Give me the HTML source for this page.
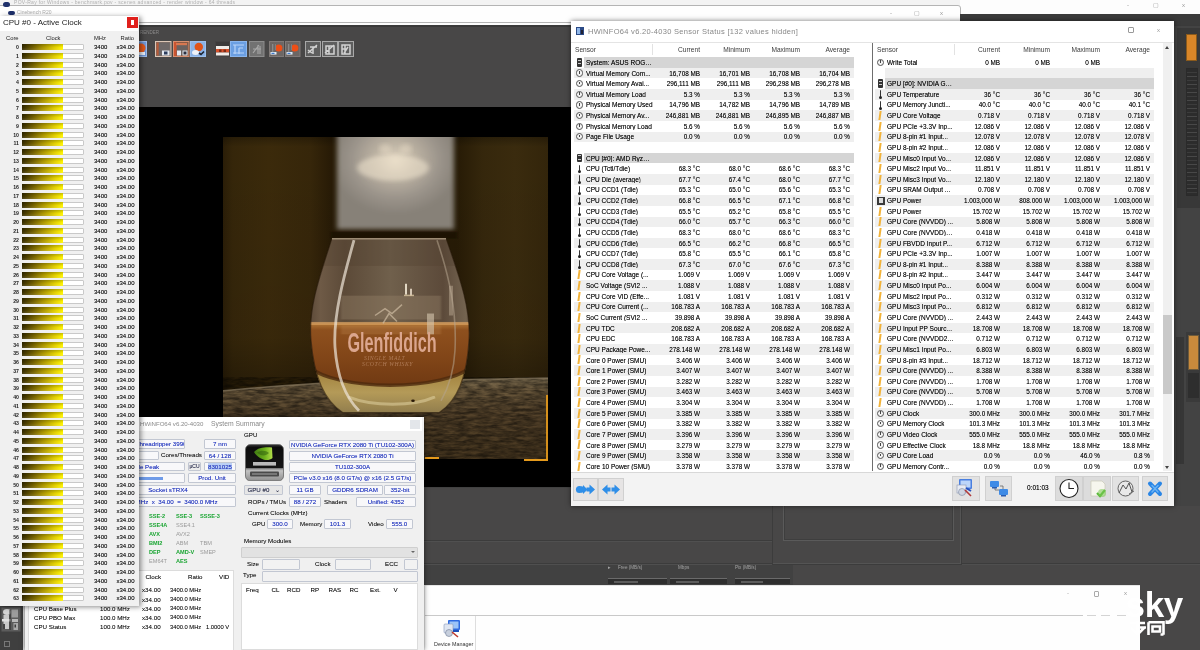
<!DOCTYPE html>
<html><head><meta charset="utf-8"><title>desktop</title>
<style>
*{box-sizing:border-box;margin:0;padding:0}
html,body{width:1200px;height:650px;overflow:hidden;background:#fff}
body{position:relative;font-family:"Liberation Sans",sans-serif;font-size:8px;color:#222;will-change:transform;background:transparent}
.a{position:absolute}
.t{position:absolute;white-space:nowrap;line-height:1}
/* left window */
#lw{left:0;top:16px;width:138.5px;height:590px;background:#f0f0f0;box-shadow:2px 1px 5px rgba(0,0,0,.45)}
#lw .tb{left:0;top:0;width:138px;height:15px;background:#fff}
#lw .row{left:0;width:138px;height:8.75px}
#lw .bar{left:22px;top:1.4px;width:62px;height:6px;background:#fff;border:1px solid #c9c9c9;border-radius:1px}
#lw .fill{left:22px;top:1.4px;width:41px;height:6px;background:linear-gradient(180deg,rgba(0,0,0,.22),rgba(0,0,0,0) 55%,rgba(255,255,255,.12)),linear-gradient(90deg,#332a00 0%,#6e5c00 25%,#a89200 50%,#e2cf00 80%,#fff400 100%)}
#lw .n{left:5px;width:14px;top:2.3px;font-size:5.2px;font-weight:bold;text-align:right;color:#222}
#lw .m{left:94px;top:1.3px;font-size:6px;color:#111;text-shadow:0 0 .4px rgba(0,0,0,.5)}
#lw .x{left:116.5px;top:1.3px;font-size:6px;color:#111;text-shadow:0 0 .4px rgba(0,0,0,.5)}
/* sensors */
#sw{left:571px;top:21px;width:603.3px;height:485.3px;background:#fff;box-shadow:0 0 5px rgba(0,0,0,.55)}
.sr{position:absolute;height:10.63px;font-size:7.4px;color:#0c0c0c;text-shadow:0 0 .5px rgba(0,0,0,.55)}
.sr .l{position:absolute;left:14px;top:1.8px;white-space:nowrap;line-height:1;max-width:76px;overflow:hidden;text-overflow:ellipsis;transform:scaleX(.88);transform-origin:0 50%}
.sr .v{position:absolute;top:1.8px;width:60px;text-align:right;white-space:nowrap;line-height:1;transform:scaleX(.86);transform-origin:100% 50%}
.g1{background:#efefef}
.g2{background:#d5d5d5}
.hd{position:absolute;font-size:6.6px;color:#3a3a3a;white-space:nowrap;line-height:1}
/* summary */
#sm{left:25px;top:417px;width:398.5px;height:233px;background:#f0f0f0;box-shadow:0 0 5px rgba(0,0,0,.55)}
.bx{position:absolute;background:#f8f8fa;border:1px solid #c2c7d2;border-radius:1px;font-size:6.2px;color:#2438c0;text-shadow:0 0 .4px rgba(36,56,190,.55);text-align:center;white-space:nowrap;overflow:hidden}
.lb{position:absolute;font-size:6.2px;color:#161616;text-shadow:0 0 .4px rgba(0,0,0,.4);white-space:nowrap;line-height:1}
.gr{position:absolute;font-size:5.6px;color:#1aa532;white-space:nowrap;line-height:1;font-weight:bold}
.gy{position:absolute;font-size:5.6px;color:#9a9a9a;white-space:nowrap;line-height:1}
</style></head>
<body>
<!-- sec_bg -->
<div class="a" style="left:0;top:0;width:1200px;height:26px;background:#fdfdfd"></div>
<div class="a" style="left:0;top:0;width:960px;height:6px;background:#f3f3f3"></div>
<div class="a" style="left:-3px;top:5.2px;width:963.5px;height:18px;border:1px solid #b4b4b4;border-radius:0 3px 0 0;background:#fefefe"></div>
<div class="t" style="left:14px;top:.3px;font-size:5px;color:#b0b0b0;letter-spacing:.3px">POV-Ray for Windows - benchmark.pov - scenes advanced - render window - 64 threads</div>
<div class="a" style="left:3px;top:2px;width:7px;height:5px;border-radius:3px;background:#1d2f6a"></div>
<div class="a" style="left:8px;top:10.5px;width:7px;height:4px;border-radius:3px;background:#1d2f6a"></div>
<div class="t" style="left:17px;top:10px;font-size:5px;color:#aaa">Cinebench R20</div>
<div class="t" style="left:890px;top:10px;font-size:6px;color:#999">-</div>
<div class="t" style="left:914px;top:10px;font-size:6px;color:#999">&#9634;</div>
<div class="t" style="left:940px;top:10px;font-size:6px;color:#999">x</div>
<div class="t" style="left:1127px;top:2px;font-size:6px;color:#999">-</div>
<div class="t" style="left:1153px;top:2px;font-size:6px;color:#999">&#9634;</div>
<div class="t" style="left:1182px;top:2px;font-size:6px;color:#999">x</div>
<div class="a" style="left:130px;top:25px;width:1070px;height:625px;background:#484747"></div>
<div class="a" style="left:960px;top:14px;width:240px;height:12px;background:#3b3b3b"></div>
<div class="a" style="left:130px;top:25px;width:1070px;height:2px;background:#3a3a3a"></div>
<div class="t" style="left:140px;top:31px;font-size:4.5px;color:#8a8a8a">RENDER</div>
<div class="a" style="left:138px;top:107px;width:434px;height:380px;background:#000"></div>
<!-- sec_toolbar -->
<svg class="a" style="left:131px;top:41px" width="16" height="16" viewBox="0 0 16 16"><rect x=".5" y=".5" width="15" height="15" fill="#6f98d8" stroke="#9ab8e8"/><circle cx="10" cy="7" r="4.5" fill="#e0581c"/><rect x="8" y="11" width="6" height="3" fill="#e8eef8"/></svg>
<svg class="a" style="left:155px;top:41px" width="16.5" height="16" viewBox="0 0 16.5 16"><rect x=".5" y=".5" width="15.5" height="15" fill="#7a6c66" stroke="#dcc6b6"/><rect x="2" y="2" width="12.500" height="12" fill="#6e6868"/><rect x="1.500" y="1.500" width="2.200" height="13" fill="#b45a38"/><rect x="7" y="9.500" width="7.500" height="5" fill="#e4eaf2"/><rect x="9" y="10.500" width="3.500" height="3" fill="#2c3c5c"/></svg>
<svg class="a" style="left:173px;top:41px" width="16.5" height="16" viewBox="0 0 16.5 16"><rect x=".5" y=".5" width="15.5" height="15" fill="#8a5a44" stroke="#d89070"/><rect x="2" y="2" width="12.500" height="12" fill="#6a6260"/><rect x="1" y="1" width="2.600" height="14" fill="#cc5430"/><rect x="3" y="2" width="11" height="2.200" fill="#d87850"/><rect x="4" y="9.500" width="4" height="5" fill="#e4eaf2"/><rect x="9.500" y="9.500" width="5" height="5" fill="#e4eaf2"/><rect x="10.500" y="10.500" width="3" height="3" fill="#2c3040"/></svg>
<svg class="a" style="left:190px;top:41px" width="16" height="16" viewBox="0 0 16 16"><rect x=".5" y=".5" width="15" height="15" fill="#8ab2e6" stroke="#9cc0ee"/><circle cx="8.800" cy="6" r="4.200" fill="#e0541a"/><ellipse cx="5.500" cy="11.500" rx="3.500" ry="2.500" fill="#eef2f8"/><path d="M9,12 l2,1.500 l3,-3" stroke="#1c2430" stroke-width="1.600" fill="none"/></svg>
<svg class="a" style="left:215px;top:41px" width="15" height="16" viewBox="0 0 15 16"><rect x=".5" y=".5" width="14" height="15" fill="#3c3a3a" stroke="#444242"/><rect x="1" y="5" width="13" height="3" fill="#f0ece8"/><rect x="1" y="8" width="13" height="3.500" fill="#d8502a"/><rect x="1" y="11.500" width="13" height="3" fill="#f0ece8"/><rect x="4" y="8.500" width="2.500" height="2.500" fill="#7a2c18"/><rect x="8.500" y="8.500" width="2.500" height="2.500" fill="#7a2c18"/></svg>
<svg class="a" style="left:230px;top:41px" width="17" height="16" viewBox="0 0 17 16"><rect x=".5" y=".5" width="16" height="15" fill="#6b9fe2" stroke="#8ab6ee"/><path d="M3,4 h11 M5,4 v9 M9,7 h4 M9,7 v6 M3,12 h11" stroke="#b8d4f8" stroke-width="1.200" fill="none"/></svg>
<svg class="a" style="left:249px;top:41px" width="15.5" height="16" viewBox="0 0 15.5 16"><rect x=".5" y=".5" width="14.5" height="15" fill="#727272" stroke="#8c8c8c"/><path d="M4,12 l6,-8 M9,4 v9 M4,8 h8 M11,5 v8" stroke="#a8a8a8" stroke-width="1.100" fill="none"/></svg>
<svg class="a" style="left:268.5px;top:41px" width="15.5" height="16" viewBox="0 0 15.5 16"><rect x=".5" y=".5" width="14.5" height="15" fill="#6c6664" stroke="#807a78"/><circle cx="9.800" cy="7" r="3.600" fill="#ee4e16"/><rect x="1.500" y="11" width="6" height="2.600" fill="#dfeaf6"/><rect x="2.500" y="11.800" width="3" height="1.200" fill="#3d78c8"/><rect x="3" y="3" width="1.300" height="8" fill="#8a8a8a"/><rect x="6" y="3" width="1" height="6" fill="#7e7e7e"/></svg>
<svg class="a" style="left:285px;top:41px" width="15.5" height="16" viewBox="0 0 15.5 16"><rect x=".5" y=".5" width="14.5" height="15" fill="#6c6664" stroke="#807a78"/><circle cx="9.800" cy="7" r="3.600" fill="#ee4e16"/><rect x="1.500" y="11" width="6" height="2.600" fill="#dfeaf6"/><rect x="2.500" y="11.800" width="3" height="1.200" fill="#3d78c8"/><rect x="3" y="3" width="1.300" height="8" fill="#8a8a8a"/><rect x="6" y="3" width="1" height="6" fill="#7e7e7e"/></svg>
<svg class="a" style="left:305px;top:41px" width="16" height="16" viewBox="0 0 16 16"><rect x=".5" y=".5" width="15" height="15" fill="#5e5e5e" stroke="#a8a8a8"/><path d="M3,12 l9,-8 M5,6 h7 M8,6 v7 M3,9 l4,3" stroke="#d2d2d2" stroke-width="1.500" fill="none"/></svg>
<svg class="a" style="left:322px;top:41px" width="16" height="16" viewBox="0 0 16 16"><rect x=".5" y=".5" width="15" height="15" fill="#5e5e5e" stroke="#a8a8a8"/><path d="M3,12 l9,-8 M4,5 h8 v8 h-8z M7,5 v8" stroke="#d2d2d2" stroke-width="1.500" fill="none"/></svg>
<svg class="a" style="left:338px;top:41px" width="16" height="16" viewBox="0 0 16 16"><rect x=".5" y=".5" width="15" height="15" fill="#5e5e5e" stroke="#a8a8a8"/><path d="M4,4 h8 v9 h-8z M7,4 v9 M4,8 h5 M10,6 l-4,6" stroke="#d2d2d2" stroke-width="1.500" fill="none"/></svg>
<!-- sec_render -->
<svg class="a" style="left:223.3px;top:136.5px" width="325" height="322.3" viewBox="0 0 325 325" preserveAspectRatio="none">
<defs>
<linearGradient id="bgx" x1="0" x2="1" y1="0" y2="0">
<stop offset="0" stop-color="#2a1d07"/><stop offset=".03" stop-color="#35260a"/><stop offset=".14" stop-color="#3b2a0b"/><stop offset=".27" stop-color="#36260a"/><stop offset=".33" stop-color="#281b06"/>
<stop offset=".72" stop-color="#271b06"/><stop offset=".8" stop-color="#35270c"/><stop offset=".9" stop-color="#3a2b0e"/><stop offset="1" stop-color="#33250b"/>
</linearGradient>
<linearGradient id="bgy" x1="0" x2="0" y1="0" y2="1">
<stop offset="0" stop-color="#000" stop-opacity=".25"/><stop offset=".03" stop-color="#000" stop-opacity="0"/><stop offset=".62" stop-color="#000" stop-opacity=".05"/><stop offset=".78" stop-color="#000" stop-opacity=".3"/>
</linearGradient>
<radialGradient id="win" cx=".5" cy=".3" r=".55">
<stop offset="0" stop-color="#e2d6c2"/><stop offset=".3" stop-color="#beb4a4"/><stop offset=".7" stop-color="#9a938a"/><stop offset="1" stop-color="#878178"/>
</radialGradient>
<linearGradient id="gl" x1="0" x2="1" y1="0" y2="0">
<stop offset="0" stop-color="#524030"/><stop offset=".1" stop-color="#6e5a46"/><stop offset=".24" stop-color="#5c4a38"/><stop offset=".5" stop-color="#70604c"/><stop offset=".8" stop-color="#5c4a3a"/><stop offset=".93" stop-color="#746450"/><stop offset="1" stop-color="#4c3c2e"/>
</linearGradient>
<linearGradient id="liq" x1="0" x2="0" y1="0" y2="1">
<stop offset="0" stop-color="#b07636"/><stop offset=".1" stop-color="#8e501e"/><stop offset=".5" stop-color="#824618"/><stop offset="1" stop-color="#6e3812"/>
</linearGradient>
<linearGradient id="base" x1="0" x2="0" y1="0" y2="1">
<stop offset="0" stop-color="#9c7a34"/><stop offset=".5" stop-color="#b49a58"/><stop offset="1" stop-color="#86744a"/>
</linearGradient>
<linearGradient id="tbl" x1="0" x2="0" y1="0" y2="1">
<stop offset="0" stop-color="#7a6a4e"/><stop offset=".15" stop-color="#6a583c"/><stop offset=".45" stop-color="#54422a"/><stop offset="1" stop-color="#46361f"/>
</linearGradient>
<filter id="b2" x="-10%" y="-10%" width="120%" height="120%"><feGaussianBlur stdDeviation="2.4"/></filter>
<filter id="b1"><feGaussianBlur stdDeviation=".8"/></filter>
<filter id="b0"><feGaussianBlur stdDeviation=".4"/></filter>
<filter id="nz" x="0" y="0" width="100%" height="100%"><feTurbulence type="fractalNoise" baseFrequency=".09 .35" numOctaves="3" seed="4"/><feColorMatrix values="0 0 0 0 0  0 0 0 0 0  0 0 0 0 0  1.1 1.1 1.1 0 -1.15"/></filter>
<clipPath id="gc"><path d="M109,102 C97,140 85,172 88,205 C91,242 101,266 120,278 L216,278 C235,266 244,242 246,205 C248,172 236,140 223,102 Z"/></clipPath>
</defs>
<rect width="325" height="325" fill="url(#bgx)"/>
<rect width="325" height="325" fill="url(#bgy)"/>
<rect x="114" y="-6" width="117" height="99" fill="url(#win)" filter="url(#b2)"/>
<ellipse cx="170" cy="31" rx="36" ry="13" fill="#f2e6d0" opacity=".55" filter="url(#b2)"/>
<ellipse cx="162" cy="12" rx="6" ry="5" fill="#efe2cc" opacity=".4" filter="url(#b2)"/><ellipse cx="183" cy="12" rx="6" ry="5" fill="#efe2cc" opacity=".4" filter="url(#b2)"/>
<rect x="108" y="95.500" width="126" height="7" fill="#171005" opacity=".55" filter="url(#b1)"/>
<!-- table -->
<path d="M0,256 C60,250 110,247 160,246 C220,245 280,244 325,243 L325,325 L0,325 Z" fill="url(#tbl)"/>
<rect x="0" y="243" width="325" height="82" fill="#1c1206" filter="url(#nz)" opacity=".5"/>
<path d="M0,256 C60,250 110,247 160,246 C220,245 280,244 325,243 L325,240 L0,240 Z" fill="#2a1d08" opacity=".0"/>
<path d="M0,256 C60,250 110,247 160,246 C220,245 280,244 325,243" stroke="#85765e" stroke-width="1.5" fill="none" opacity=".7"/>
<!-- glass -->
<g clip-path="url(#gc)">
<rect x="80" y="100" width="175" height="185" fill="url(#gl)"/>
<rect x="80" y="100" width="175" height="30" fill="#4e3e2e" opacity=".3"/>
<rect x="84" y="188" width="166" height="66" fill="url(#liq)"/>
<path d="M84,230 C110,257 224,257 250,230 L250,285 L84,285 Z" fill="url(#base)"/>
<path d="M84,230 C110,257 224,257 250,230" stroke="#4e2a0e" stroke-width="3.500" fill="none" opacity=".8"/>
<path d="M125,262 C150,272 190,272 212,262" stroke="#e6d8a8" stroke-width="3" fill="none" opacity=".5" filter="url(#b0)"/>
<rect x="84" y="186.500" width="166" height="3" fill="#d8a060" opacity=".75"/>
<rect x="118" y="160" width="100" height="24" fill="#97826a" opacity=".4" filter="url(#b1)"/>
<rect x="118" y="190" width="100" height="9" fill="#c89058" opacity=".25" filter="url(#b1)"/>
<path d="M131,104 C121,140 110,180 112,212 C114,240 122,262 136,276" stroke="#ece2d4" stroke-width="2.800" fill="none" opacity=".72" filter="url(#b0)"/>
<path d="M214,104 C226,140 234,175 232,215 C231,235 226,252 218,266" stroke="#b4a48e" stroke-width="1.600" fill="none" opacity=".55"/>
<rect x="204" y="178" width="7" height="21" fill="#d6c6b0" opacity=".6" filter="url(#b0)"/>
<rect x="226" y="150" width="4" height="30" fill="#c4b29c" opacity=".45" filter="url(#b0)"/>
<rect x="182" y="148" width="2" height="11" fill="#f0e4d0" opacity=".9"/><rect x="187" y="153" width="2" height="7" fill="#f0e4d0" opacity=".8"/><rect x="181" y="159" width="10" height="1.500" fill="#d8c4a0" opacity=".8"/>
<path d="M152,180 l10,-7 l7,5 l10,-9 M160,188 l6,-10 l8,8" stroke="#d4c2a8" stroke-width="1.500" fill="none" opacity=".65"/>
</g>
<path d="M109,102 C97,140 85,172 88,205 C91,242 101,266 120,278 L216,278 C235,266 244,242 246,205 C248,172 236,140 223,102 Z" fill="none" stroke="#241808" stroke-width="1.200" opacity=".6"/>
<path d="M109,102.500 L223,102.500" stroke="#a8967e" stroke-width="1.500" opacity=".9"/>
<text x="0" y="0" transform="translate(124.500,217) scale(.6,1)" font-family="Liberation Sans, sans-serif" font-weight="bold" font-size="27" fill="#dba68e">Glenfiddich</text>
<text x="141" y="224.500" font-family="Liberation Serif, serif" font-style="italic" font-size="5.800" fill="#b07c58" letter-spacing=".5">SINGLE MALT</text>
<text x="139" y="230.500" font-family="Liberation Serif, serif" font-style="italic" font-size="5.800" fill="#b07c58" letter-spacing=".5">SCOTCH WHISKY</text>
<ellipse cx="190" cy="266" rx="1.800" ry="1.300" fill="#2a1a08"/>
</svg>
<div class="a" style="left:545.5px;top:395px;width:2.5px;height:66px;background:#e59a1c;opacity:.9"></div>
<div class="a" style="left:524px;top:458.7px;width:24px;height:2.3px;background:#e59a1c"></div>
<div class="a" style="left:425px;top:457px;width:14px;height:2.3px;background:#e59a1c"></div>
<!-- sec_dark -->
<div class="a" style="left:138px;top:487px;width:434px;height:1px;background:#414141"></div>
<div class="a" style="left:423px;top:540px;width:349px;height:1px;background:#3c3c3c"></div>
<div class="a" style="left:423px;top:541px;width:349px;height:1px;background:#505050"></div>
<div class="a" style="left:423px;top:563px;width:777px;height:1px;background:#3c3c3c"></div>
<div class="a" style="left:423px;top:564px;width:777px;height:1px;background:#4f4f4f"></div>
<div class="a" style="left:772px;top:500px;width:190px;height:64.5px;border:1px solid #3c3c3c;border-top:none;box-shadow:inset -1px -1px 0 #545454"></div>
<div class="a" style="left:782.5px;top:500px;width:171px;height:41px;border:1px solid #5a5a5a;border-top:none;box-shadow:inset 0 0 0 1px #3e3e3e"></div>
<div class="a" style="left:423px;top:565px;width:370px;height:20px;background:#414141"></div>
<div class="t" style="left:608px;top:565.5px;font-size:4.6px;color:#a4a4a4">&#9656;</div>
<div class="t" style="left:618px;top:565.5px;font-size:4.6px;color:#a4a4a4">Free (MB/s)</div>
<div class="t" style="left:678px;top:565.5px;font-size:4.6px;color:#a4a4a4">Mbps</div>
<div class="t" style="left:735px;top:565.5px;font-size:4.6px;color:#a4a4a4">Pix (MB/s)</div>
<div class="a" style="left:608px;top:578px;width:59px;height:6px;background:#2e2e2e;border-top:1px solid #6a6a6a"></div>
<div class="a" style="left:614px;top:581px;width:24px;height:2px;background:#5c5c5c"></div>
<div class="a" style="left:670px;top:578px;width:57px;height:6px;background:#2e2e2e;border-top:1px solid #6a6a6a"></div>
<div class="a" style="left:676px;top:581px;width:23px;height:2px;background:#5c5c5c"></div>
<div class="a" style="left:735px;top:578px;width:55px;height:6px;background:#2e2e2e;border-top:1px solid #6a6a6a"></div>
<div class="a" style="left:741px;top:581px;width:22px;height:2px;background:#5c5c5c"></div>
<div class="a" style="left:1173px;top:26px;width:27px;height:480px;background:#434343"></div>
<div class="a" style="left:1177px;top:28px;width:23px;height:180px;background:#383838"></div>
<div class="a" style="left:1186px;top:34px;width:11px;height:27px;background:#d98628;border:1px solid #8a5a1c"></div>
<div class="a" style="left:1186px;top:68px;width:12px;height:128px;background:repeating-linear-gradient(180deg,#2c2c2c 0 3px,#3c3c3c 3px 4px,#2c2c2c 4px 7px,#484848 7px 8px);border:1px solid #2a2a2a"></div>
<div class="a" style="left:1198px;top:30px;width:2px;height:170px;background:#3a3a3a"></div>
<div class="a" style="left:1186px;top:332px;width:14px;height:70px;background:#3a3a3a"></div>
<div class="a" style="left:1187.5px;top:335px;width:11px;height:35px;background:#c98a3c;border:1px solid #6e5a3a"></div>
<div class="a" style="left:1188px;top:373px;width:11px;height:25px;background:#2e2e2e"></div>
<div class="a" style="left:1176px;top:337px;width:8px;height:127px;background:#363636"></div>
<!-- sec_bottom -->
<div class="a" style="left:0;top:604px;width:26px;height:46px;background:#3f3f3f"></div>
<svg class="a" style="left:0;top:606px" width="23" height="44" viewBox="0 0 23 44"><defs><filter id="sb"><feGaussianBlur stdDeviation=".5"/></filter></defs><g filter="url(#sb)"><rect x="1.500" y="1.500" width="19" height="24" fill="#5c5c5c"/><ellipse cx="7" cy="6" rx="4" ry="3" fill="#d4d4d4"/><rect x="3.500" y="9" width="5.500" height="14" fill="#cacaca"/><rect x="2" y="13" width="9" height="2.500" fill="#e0e0e0"/><rect x="11.500" y="3.500" width="6.500" height="8" fill="#9c9c9c"/><rect x="12" y="13" width="6" height="3" fill="#b8b8b8"/><rect x="13.500" y="17" width="4.500" height="7" fill="#a8a8a8"/><rect x="9.500" y="4" width="1.200" height="20" fill="#3a3a3a"/><rect x="3" y="18" width="2" height="5" fill="#444"/><rect x="14.500" y="18.500" width="1.500" height="3" fill="#3c3c3c"/></g></svg>
<div class="a" style="left:4px;top:641px;width:6px;height:6px;border:1px solid #777"></div>
<div class="a" style="left:22.5px;top:604px;width:5px;height:46px;background:#e2e2e2"></div>
<div class="a" style="left:423px;top:585px;width:717px;height:65px;background:#fefefe;border-left:1px solid #d8d8d8;border-top:1px solid #e6e6e6"></div>
<div class="a" style="left:425px;top:615.3px;width:658px;height:1px;background:#c9c9c9"></div>
<div class="a" style="left:1087px;top:615.3px;width:9px;height:1px;background:#d4d4d4"></div>
<div class="a" style="left:1101px;top:615.3px;width:9px;height:1px;background:#d4d4d4"></div>
<div class="a" style="left:1117px;top:615.3px;width:9px;height:1px;background:#d4d4d4"></div>
<div class="t" style="left:1067px;top:590px;font-size:6px;color:#aaa">-</div>
<div class="a" style="left:1094px;top:591px;width:5px;height:6px;border:1px solid #aaa;border-radius:1px"></div>
<div class="t" style="left:1124px;top:590px;font-size:6px;color:#999">x</div>
<div class="a" style="left:475px;top:616px;width:1px;height:34px;background:#dedede"></div>
<div class="a" style="left:422px;top:585px;width:3px;height:65px;background:#ececec"></div>
<svg class="a" style="left:440px;top:619px" width="24" height="22" viewBox="0 0 24 22"><rect x="8" y="1" width="12" height="10" rx="1" fill="#2e6ae0"/><rect x="9.500" y="2.500" width="9" height="7" fill="#9cc4f8"/><rect x="4" y="5" width="9" height="9" rx="1" fill="#dfe6f2" stroke="#8899bb" stroke-width=".6"/><circle cx="9" cy="14" r="3.500" fill="#c7cfdd" stroke="#6f7a92" stroke-width=".6"/><path d="M12,13 l6,5" stroke="#c0392b" stroke-width="1.600"/><rect x="13" y="11" width="6" height="2" fill="#1e4fb8"/></svg>
<div class="t" style="left:434px;top:642.3px;font-size:5.4px;color:#333">Device Manager</div>
<!-- sec_summary -->
<div id="sm" class="a">
<div class="a" style="left:0;top:0;width:397px;height:14px;background:#fff"></div>
<div class="lb" style="left:115.0px;top:4.4px;font-size:6.1px;color:#8a8a8a;text-shadow:none">HWiNFO64 v6.20-4030</div>
<div class="lb" style="left:186.0px;top:4.4px;font-size:6.8px;color:#8a8a8a;text-shadow:none">System Summary</div>
<div class="a" style="left:385px;top:3px;width:10px;height:9px;background:#e3e6ea"></div>
<div class="bx" style="left:75.0px;top:22.0px;width:85.0px;height:10.0px;line-height:8.0px;">AMD Ryzen Threadripper 3990X</div>
<div class="bx" style="left:179.0px;top:22.0px;width:32.0px;height:10.0px;line-height:8.0px;">7 nm</div>
<div class="bx" style="left:75.0px;top:34.0px;width:59.0px;height:9.0px;line-height:7.0px;">B0</div>
<div class="lb" style="left:136.0px;top:35.3px;">Cores/Threads</div>
<div class="bx" style="left:179.0px;top:34.0px;width:32.0px;height:9.0px;line-height:7.0px;">64 / 128</div>
<div class="bx" style="left:75.0px;top:45.0px;width:85.0px;height:9.0px;line-height:7.0px;">Castle Peak</div>
<div class="bx" style="left:163.0px;top:45.0px;width:13.0px;height:9.0px;line-height:7.0px;color:#333;background:#ececec;font-size:5px">µCU</div>
<div class="bx" style="left:179.0px;top:45.0px;width:32.0px;height:9.0px;line-height:7.0px;"><span style="background:#bcd0f4">8301025</span></div>
<div class="bx" style="left:75.0px;top:56.0px;width:85.0px;height:10.0px;line-height:8.0px;"><span style="display:inline-block;width:40px;height:3px;background:#6f9be8;vertical-align:middle"></span></div>
<div class="bx" style="left:163.0px;top:56.0px;width:48.0px;height:10.0px;line-height:8.0px;">Prod. Unit</div>
<div class="bx" style="left:75.0px;top:68.0px;width:136.0px;height:10.0px;line-height:8.0px;">Socket sTRX4</div>
<div class="bx" style="left:75.0px;top:80.0px;width:136.0px;height:10.0px;line-height:8.0px;">100.0 MHz &nbsp;x&nbsp; 34.00 &nbsp;=&nbsp; 3400.0 MHz</div>
<div class="gr" style="left:124px;top:97px">SSE-2</div>
<div class="gr" style="left:151px;top:97px">SSE-3</div>
<div class="gr" style="left:175px;top:97px">SSSE-3</div>
<div class="gr" style="left:124px;top:106px">SSE4A</div>
<div class="gy" style="left:151px;top:106px">SSE4.1</div>
<div class="gr" style="left:124px;top:115px">AVX</div>
<div class="gy" style="left:151px;top:115px">AVX2</div>
<div class="gr" style="left:124px;top:124px">BMI2</div>
<div class="gy" style="left:151px;top:124px">ABM</div>
<div class="gy" style="left:175px;top:124px">TBM</div>
<div class="gr" style="left:124px;top:133px">DEP</div>
<div class="gr" style="left:151px;top:133px">AMD-V</div>
<div class="gy" style="left:175px;top:133px">SMEP</div>
<div class="gy" style="left:124px;top:142px">EM64T</div>
<div class="gr" style="left:151px;top:142px">AES</div>
<div class="a" style="left:3px;top:152.5px;width:206px;height:81px;background:#fff;border:1px solid #dcdcdc"></div>
<div class="lb" style="left:120.5px;top:157.4px;">Clock</div>
<div class="lb" style="left:163.0px;top:157.4px;">Ratio</div>
<div class="lb" style="left:194.0px;top:157.4px;">VID</div>
<div class="lb" style="left:9.0px;top:170.3px;">CPU LFM (Min)</div>
<div class="lb" style="left:75.0px;top:170.3px;">100.0 MHz</div>
<div class="lb" style="left:117.0px;top:170.3px;">x34.00</div>
<div class="lb" style="left:145.0px;top:170.3px;font-size:5.8px;margin-top:.4px">3400.0 MHz</div>
<div class="lb" style="left:9.0px;top:179.6px;">CPU HFM (Max)</div>
<div class="lb" style="left:75.0px;top:179.6px;">100.0 MHz</div>
<div class="lb" style="left:117.0px;top:179.6px;">x34.00</div>
<div class="lb" style="left:145.0px;top:179.6px;font-size:5.8px;margin-top:.4px">3400.0 MHz</div>
<div class="lb" style="left:9.0px;top:188.8px;">CPU Base Plus</div>
<div class="lb" style="left:75.0px;top:188.8px;">100.0 MHz</div>
<div class="lb" style="left:117.0px;top:188.8px;">x34.00</div>
<div class="lb" style="left:145.0px;top:188.8px;font-size:5.8px;margin-top:.4px">3400.0 MHz</div>
<div class="lb" style="left:9.0px;top:198.1px;">CPU PBO Max</div>
<div class="lb" style="left:75.0px;top:198.1px;">100.0 MHz</div>
<div class="lb" style="left:117.0px;top:198.1px;">x34.00</div>
<div class="lb" style="left:145.0px;top:198.1px;font-size:5.8px;margin-top:.4px">3400.0 MHz</div>
<div class="lb" style="left:9.0px;top:207.4px;">CPU Status</div>
<div class="lb" style="left:75.0px;top:207.4px;">100.0 MHz</div>
<div class="lb" style="left:117.0px;top:207.4px;">x34.00</div>
<div class="lb" style="left:145.0px;top:207.4px;font-size:5.8px;margin-top:.4px">3400.0 MHz</div>
<div class="lb" style="left:181.0px;top:207.4px;font-size:5.8px;margin-top:.4px">1.0000 V</div>
<div class="lb" style="left:219.0px;top:14.8px;">GPU</div>
<svg class="a" style="left:220px;top:26.5px" width="39" height="37.500" viewBox="0 0 39 37.500"><defs><linearGradient id="nvb" x1="0" x2="0" y1="0" y2="1"><stop offset="0" stop-color="#3a3a3a"/><stop offset=".08" stop-color="#0c0c0c"/><stop offset=".64" stop-color="#141414"/><stop offset=".66" stop-color="#8a8a8a"/><stop offset=".72" stop-color="#c2c2c2"/><stop offset="1" stop-color="#8e8e8e"/></linearGradient><linearGradient id="nvg" x1="0" x2="1" y1="0" y2="0"><stop offset="0" stop-color="#3f7a12"/><stop offset=".6" stop-color="#6fb31e"/><stop offset="1" stop-color="#b4e04a"/></linearGradient></defs><rect x=".5" y=".5" width="38" height="36.500" rx="5" fill="url(#nvb)" stroke="#666" stroke-width=".8"/><path d="M9,8 C13,3.500 20,3 27,3.500 L27.500,14 C24,17 19,16.500 15,14 C12,12 10,10 9,8z" fill="url(#nvg)"/><path d="M12,8.500 C16,6 21,6.500 24,9 C21,12 16,12.500 12,8.500z" fill="#2f5e0e" opacity=".55"/><rect x="8" y="18" width="23" height="3.600" fill="#d8d8d8" opacity=".85"/><rect x="5" y="27.500" width="29" height="5" rx="1" fill="#4a4a4a"/><rect x="7" y="29" width="25" height="2" fill="#8a8a8a" opacity=".7"/></svg>
<div class="bx" style="left:264.0px;top:22.5px;width:127.0px;height:9.5px;line-height:7.5px;">NVIDIA GeForce RTX 2080 Ti (TU102-300A)</div>
<div class="bx" style="left:264.0px;top:34.0px;width:127.0px;height:10.0px;line-height:8.0px;">NVIDIA GeForce RTX 2080 Ti</div>
<div class="bx" style="left:264.0px;top:45.0px;width:127.0px;height:10.0px;line-height:8.0px;">TU102-300A</div>
<div class="bx" style="left:264.0px;top:56.0px;width:127.0px;height:10.0px;line-height:8.0px;">PCIe v3.0 x16 (8.0 GT/s) @ x16 (2.5 GT/s)</div>
<div class="bx" style="left:219.0px;top:68.0px;width:39.0px;height:10.0px;line-height:8.0px;color:#333;background:#e6e6e6">GPU #0 &nbsp;&nbsp;&#8964;</div>
<div class="bx" style="left:264.0px;top:68.0px;width:32.0px;height:10.0px;line-height:8.0px;">11 GB</div>
<div class="bx" style="left:302.0px;top:68.0px;width:56.0px;height:10.0px;line-height:8.0px;">GDDR6 SDRAM</div>
<div class="bx" style="left:359.0px;top:68.0px;width:32.0px;height:10.0px;line-height:8.0px;">352-bit</div>
<div class="lb" style="left:223.0px;top:81.8px;">ROPs / TMUs</div>
<div class="bx" style="left:264.0px;top:80.0px;width:32.0px;height:10.0px;line-height:8.0px;">88 / 272</div>
<div class="lb" style="left:299.0px;top:81.8px;">Shaders</div>
<div class="bx" style="left:331.0px;top:80.0px;width:60.0px;height:10.0px;line-height:8.0px;">Unified: 4352</div>
<div class="lb" style="left:223.0px;top:92.8px;">Current Clocks (MHz)</div>
<div class="lb" style="left:227.0px;top:103.8px;">GPU</div>
<div class="bx" style="left:242.0px;top:102.0px;width:26.0px;height:10.0px;line-height:8.0px;">300.0</div>
<div class="lb" style="left:275.0px;top:103.8px;">Memory</div>
<div class="bx" style="left:299.0px;top:102.0px;width:27.0px;height:10.0px;line-height:8.0px;">101.3</div>
<div class="lb" style="left:343.0px;top:103.8px;">Video</div>
<div class="bx" style="left:361.0px;top:102.0px;width:27.0px;height:10.0px;line-height:8.0px;">555.0</div>
<div class="lb" style="left:219.0px;top:120.8px;">Memory Modules</div>
<div class="bx" style="left:216.0px;top:130.0px;width:177.0px;height:10.5px;line-height:8.5px;background:#e2e2e2;border-color:#cfcfcf"></div>
<div class="a" style="left:386px;top:133.5px;width:0;height:0;border-left:2px solid transparent;border-right:2px solid transparent;border-top:2.5px solid #666"></div>
<div class="lb" style="left:222.0px;top:143.8px;">Size</div>
<div class="bx" style="left:236.6px;top:142.0px;width:38.4px;height:10.5px;line-height:8.5px;background:#f2f2f2"></div>
<div class="lb" style="left:290.0px;top:143.8px;">Clock</div>
<div class="bx" style="left:309.5px;top:142.0px;width:36.0px;height:10.5px;line-height:8.5px;background:#f2f2f2"></div>
<div class="lb" style="left:360.0px;top:143.8px;">ECC</div>
<div class="bx" style="left:378.5px;top:142.0px;width:14.5px;height:10.5px;line-height:8.5px;background:#f2f2f2"></div>
<div class="lb" style="left:218.0px;top:155.3px;">Type</div>
<div class="bx" style="left:236.6px;top:154.0px;width:156.4px;height:10.5px;line-height:8.5px;background:#f2f2f2"></div>
<div class="a" style="left:216px;top:166px;width:177px;height:67px;background:#fff;border:1px solid #dcdcdc"></div>
<div class="lb" style="left:221.0px;top:170.3px;">Freq</div>
<div class="lb" style="left:246.5px;top:170.3px;">CL</div>
<div class="lb" style="left:262.0px;top:170.3px;">RCD</div>
<div class="lb" style="left:285.5px;top:170.3px;">RP</div>
<div class="lb" style="left:303.5px;top:170.3px;">RAS</div>
<div class="lb" style="left:324.5px;top:170.3px;">RC</div>
<div class="lb" style="left:345.0px;top:170.3px;">Ext.</div>
<div class="lb" style="left:368.6px;top:170.3px;">V</div>
</div>
<!-- sec_left -->
<div id="lw" class="a">
<div class="a tb"></div>
<div class="t" style="left:3px;top:3px;font-size:8px;color:#222">CPU #0 - Active Clock</div>
<div class="a" style="left:127px;top:1px;width:11px;height:11px;background:#e0201c"></div>
<div class="a" style="left:131px;top:4px;width:3px;height:5px;background:#fff"></div>
<div class="t" style="left:6px;top:20px;font-size:5.8px;color:#222">Core</div>
<div class="t" style="left:46px;top:20px;font-size:5.8px;color:#222">Clock</div>
<div class="t" style="left:94px;top:20px;font-size:5.8px;color:#222">MHz</div>
<div class="t" style="left:120.5px;top:20px;font-size:5.8px;color:#222">Ratio</div>
<div class="a row" style="top:26.83px"><div class="t n">0</div><div class="a bar"></div><div class="a fill"></div><div class="t m">3400</div><div class="t x">x34.00</div></div>
<div class="a row" style="top:35.58px"><div class="t n">1</div><div class="a bar"></div><div class="a fill"></div><div class="t m">3400</div><div class="t x">x34.00</div></div>
<div class="a row" style="top:44.33px"><div class="t n">2</div><div class="a bar"></div><div class="a fill"></div><div class="t m">3400</div><div class="t x">x34.00</div></div>
<div class="a row" style="top:53.08px"><div class="t n">3</div><div class="a bar"></div><div class="a fill"></div><div class="t m">3400</div><div class="t x">x34.00</div></div>
<div class="a row" style="top:61.83px"><div class="t n">4</div><div class="a bar"></div><div class="a fill"></div><div class="t m">3400</div><div class="t x">x34.00</div></div>
<div class="a row" style="top:70.58px"><div class="t n">5</div><div class="a bar"></div><div class="a fill"></div><div class="t m">3400</div><div class="t x">x34.00</div></div>
<div class="a row" style="top:79.33px"><div class="t n">6</div><div class="a bar"></div><div class="a fill"></div><div class="t m">3400</div><div class="t x">x34.00</div></div>
<div class="a row" style="top:88.08px"><div class="t n">7</div><div class="a bar"></div><div class="a fill"></div><div class="t m">3400</div><div class="t x">x34.00</div></div>
<div class="a row" style="top:96.83px"><div class="t n">8</div><div class="a bar"></div><div class="a fill"></div><div class="t m">3400</div><div class="t x">x34.00</div></div>
<div class="a row" style="top:105.58px"><div class="t n">9</div><div class="a bar"></div><div class="a fill"></div><div class="t m">3400</div><div class="t x">x34.00</div></div>
<div class="a row" style="top:114.33px"><div class="t n">10</div><div class="a bar"></div><div class="a fill"></div><div class="t m">3400</div><div class="t x">x34.00</div></div>
<div class="a row" style="top:123.08px"><div class="t n">11</div><div class="a bar"></div><div class="a fill"></div><div class="t m">3400</div><div class="t x">x34.00</div></div>
<div class="a row" style="top:131.82px"><div class="t n">12</div><div class="a bar"></div><div class="a fill"></div><div class="t m">3400</div><div class="t x">x34.00</div></div>
<div class="a row" style="top:140.57px"><div class="t n">13</div><div class="a bar"></div><div class="a fill"></div><div class="t m">3400</div><div class="t x">x34.00</div></div>
<div class="a row" style="top:149.32px"><div class="t n">14</div><div class="a bar"></div><div class="a fill"></div><div class="t m">3400</div><div class="t x">x34.00</div></div>
<div class="a row" style="top:158.07px"><div class="t n">15</div><div class="a bar"></div><div class="a fill"></div><div class="t m">3400</div><div class="t x">x34.00</div></div>
<div class="a row" style="top:166.82px"><div class="t n">16</div><div class="a bar"></div><div class="a fill"></div><div class="t m">3400</div><div class="t x">x34.00</div></div>
<div class="a row" style="top:175.57px"><div class="t n">17</div><div class="a bar"></div><div class="a fill"></div><div class="t m">3400</div><div class="t x">x34.00</div></div>
<div class="a row" style="top:184.32px"><div class="t n">18</div><div class="a bar"></div><div class="a fill"></div><div class="t m">3400</div><div class="t x">x34.00</div></div>
<div class="a row" style="top:193.07px"><div class="t n">19</div><div class="a bar"></div><div class="a fill"></div><div class="t m">3400</div><div class="t x">x34.00</div></div>
<div class="a row" style="top:201.82px"><div class="t n">20</div><div class="a bar"></div><div class="a fill"></div><div class="t m">3400</div><div class="t x">x34.00</div></div>
<div class="a row" style="top:210.57px"><div class="t n">21</div><div class="a bar"></div><div class="a fill"></div><div class="t m">3400</div><div class="t x">x34.00</div></div>
<div class="a row" style="top:219.32px"><div class="t n">22</div><div class="a bar"></div><div class="a fill"></div><div class="t m">3400</div><div class="t x">x34.00</div></div>
<div class="a row" style="top:228.07px"><div class="t n">23</div><div class="a bar"></div><div class="a fill"></div><div class="t m">3400</div><div class="t x">x34.00</div></div>
<div class="a row" style="top:236.82px"><div class="t n">24</div><div class="a bar"></div><div class="a fill"></div><div class="t m">3400</div><div class="t x">x34.00</div></div>
<div class="a row" style="top:245.57px"><div class="t n">25</div><div class="a bar"></div><div class="a fill"></div><div class="t m">3400</div><div class="t x">x34.00</div></div>
<div class="a row" style="top:254.32px"><div class="t n">26</div><div class="a bar"></div><div class="a fill"></div><div class="t m">3400</div><div class="t x">x34.00</div></div>
<div class="a row" style="top:263.07px"><div class="t n">27</div><div class="a bar"></div><div class="a fill"></div><div class="t m">3400</div><div class="t x">x34.00</div></div>
<div class="a row" style="top:271.82px"><div class="t n">28</div><div class="a bar"></div><div class="a fill"></div><div class="t m">3400</div><div class="t x">x34.00</div></div>
<div class="a row" style="top:280.57px"><div class="t n">29</div><div class="a bar"></div><div class="a fill"></div><div class="t m">3400</div><div class="t x">x34.00</div></div>
<div class="a row" style="top:289.32px"><div class="t n">30</div><div class="a bar"></div><div class="a fill"></div><div class="t m">3400</div><div class="t x">x34.00</div></div>
<div class="a row" style="top:298.07px"><div class="t n">31</div><div class="a bar"></div><div class="a fill"></div><div class="t m">3400</div><div class="t x">x34.00</div></div>
<div class="a row" style="top:306.82px"><div class="t n">32</div><div class="a bar"></div><div class="a fill"></div><div class="t m">3400</div><div class="t x">x34.00</div></div>
<div class="a row" style="top:315.57px"><div class="t n">33</div><div class="a bar"></div><div class="a fill"></div><div class="t m">3400</div><div class="t x">x34.00</div></div>
<div class="a row" style="top:324.32px"><div class="t n">34</div><div class="a bar"></div><div class="a fill"></div><div class="t m">3400</div><div class="t x">x34.00</div></div>
<div class="a row" style="top:333.07px"><div class="t n">35</div><div class="a bar"></div><div class="a fill"></div><div class="t m">3400</div><div class="t x">x34.00</div></div>
<div class="a row" style="top:341.82px"><div class="t n">36</div><div class="a bar"></div><div class="a fill"></div><div class="t m">3400</div><div class="t x">x34.00</div></div>
<div class="a row" style="top:350.57px"><div class="t n">37</div><div class="a bar"></div><div class="a fill"></div><div class="t m">3400</div><div class="t x">x34.00</div></div>
<div class="a row" style="top:359.32px"><div class="t n">38</div><div class="a bar"></div><div class="a fill"></div><div class="t m">3400</div><div class="t x">x34.00</div></div>
<div class="a row" style="top:368.07px"><div class="t n">39</div><div class="a bar"></div><div class="a fill"></div><div class="t m">3400</div><div class="t x">x34.00</div></div>
<div class="a row" style="top:376.82px"><div class="t n">40</div><div class="a bar"></div><div class="a fill"></div><div class="t m">3400</div><div class="t x">x34.00</div></div>
<div class="a row" style="top:385.57px"><div class="t n">41</div><div class="a bar"></div><div class="a fill"></div><div class="t m">3400</div><div class="t x">x34.00</div></div>
<div class="a row" style="top:394.32px"><div class="t n">42</div><div class="a bar"></div><div class="a fill"></div><div class="t m">3400</div><div class="t x">x34.00</div></div>
<div class="a row" style="top:403.07px"><div class="t n">43</div><div class="a bar"></div><div class="a fill"></div><div class="t m">3400</div><div class="t x">x34.00</div></div>
<div class="a row" style="top:411.82px"><div class="t n">44</div><div class="a bar"></div><div class="a fill"></div><div class="t m">3400</div><div class="t x">x34.00</div></div>
<div class="a row" style="top:420.57px"><div class="t n">45</div><div class="a bar"></div><div class="a fill"></div><div class="t m">3400</div><div class="t x">x34.00</div></div>
<div class="a row" style="top:429.32px"><div class="t n">46</div><div class="a bar"></div><div class="a fill"></div><div class="t m">3400</div><div class="t x">x34.00</div></div>
<div class="a row" style="top:438.07px"><div class="t n">47</div><div class="a bar"></div><div class="a fill"></div><div class="t m">3400</div><div class="t x">x34.00</div></div>
<div class="a row" style="top:446.82px"><div class="t n">48</div><div class="a bar"></div><div class="a fill"></div><div class="t m">3400</div><div class="t x">x34.00</div></div>
<div class="a row" style="top:455.57px"><div class="t n">49</div><div class="a bar"></div><div class="a fill"></div><div class="t m">3400</div><div class="t x">x34.00</div></div>
<div class="a row" style="top:464.32px"><div class="t n">50</div><div class="a bar"></div><div class="a fill"></div><div class="t m">3400</div><div class="t x">x34.00</div></div>
<div class="a row" style="top:473.07px"><div class="t n">51</div><div class="a bar"></div><div class="a fill"></div><div class="t m">3400</div><div class="t x">x34.00</div></div>
<div class="a row" style="top:481.82px"><div class="t n">52</div><div class="a bar"></div><div class="a fill"></div><div class="t m">3400</div><div class="t x">x34.00</div></div>
<div class="a row" style="top:490.57px"><div class="t n">53</div><div class="a bar"></div><div class="a fill"></div><div class="t m">3400</div><div class="t x">x34.00</div></div>
<div class="a row" style="top:499.32px"><div class="t n">54</div><div class="a bar"></div><div class="a fill"></div><div class="t m">3400</div><div class="t x">x34.00</div></div>
<div class="a row" style="top:508.07px"><div class="t n">55</div><div class="a bar"></div><div class="a fill"></div><div class="t m">3400</div><div class="t x">x34.00</div></div>
<div class="a row" style="top:516.83px"><div class="t n">56</div><div class="a bar"></div><div class="a fill"></div><div class="t m">3400</div><div class="t x">x34.00</div></div>
<div class="a row" style="top:525.58px"><div class="t n">57</div><div class="a bar"></div><div class="a fill"></div><div class="t m">3400</div><div class="t x">x34.00</div></div>
<div class="a row" style="top:534.33px"><div class="t n">58</div><div class="a bar"></div><div class="a fill"></div><div class="t m">3400</div><div class="t x">x34.00</div></div>
<div class="a row" style="top:543.08px"><div class="t n">59</div><div class="a bar"></div><div class="a fill"></div><div class="t m">3400</div><div class="t x">x34.00</div></div>
<div class="a row" style="top:551.83px"><div class="t n">60</div><div class="a bar"></div><div class="a fill"></div><div class="t m">3400</div><div class="t x">x34.00</div></div>
<div class="a row" style="top:560.58px"><div class="t n">61</div><div class="a bar"></div><div class="a fill"></div><div class="t m">3400</div><div class="t x">x34.00</div></div>
<div class="a row" style="top:569.33px"><div class="t n">62</div><div class="a bar"></div><div class="a fill"></div><div class="t m">3400</div><div class="t x">x34.00</div></div>
<div class="a row" style="top:578.08px"><div class="t n">63</div><div class="a bar"></div><div class="a fill"></div><div class="t m">3400</div><div class="t x">x34.00</div></div>
</div>
<!-- sec_sensors -->
<div id="sw" class="a">
<div class="a" style="left:5px;top:6px;width:8px;height:8px;background:#2b4a86"></div><div class="a" style="left:6px;top:7px;width:3px;height:6px;background:#8fb6e8"></div><div class="a" style="left:10px;top:9px;width:2px;height:4px;background:#223"></div>
<div class="t" style="left:17px;top:6.5px;font-size:7.5px;color:#888;letter-spacing:.3px">HWiNFO64 v6.20-4030 Sensor Status [132 values hidden]</div>
<div class="a" style="left:557px;top:6px;width:6px;height:6px;border:1px solid #999;border-radius:1px"></div>
<div class="t" style="left:586px;top:6px;font-size:6px;color:#999">x</div>
<div class="a" style="left:300.5px;top:21px;width:1.5px;height:429px;background:#6e6e6e"></div>
<div class="a" style="left:0;top:21px;width:603px;height:1px;background:#e4e4e4"></div>
<div class="hd" style="left:4px;top:26.0px">Sensor</div>
<div class="hd" style="left:69px;top:26.0px;width:60px;text-align:right">Current</div>
<div class="hd" style="left:119px;top:26.0px;width:60px;text-align:right">Minimum</div>
<div class="hd" style="left:169px;top:26.0px;width:60px;text-align:right">Maximum</div>
<div class="hd" style="left:219px;top:26.0px;width:60px;text-align:right">Average</div>
<div class="a" style="left:81px;top:23px;width:1px;height:11px;background:#e2e2e2"></div>
<div class="hd" style="left:306px;top:26.0px">Sensor</div>
<div class="hd" style="left:369px;top:26.0px;width:60px;text-align:right">Current</div>
<div class="hd" style="left:419px;top:26.0px;width:60px;text-align:right">Minimum</div>
<div class="hd" style="left:469px;top:26.0px;width:60px;text-align:right">Maximum</div>
<div class="hd" style="left:519px;top:26.0px;width:60px;text-align:right">Average</div>
<div class="a" style="left:383px;top:23px;width:1px;height:11px;background:#e2e2e2"></div>
<div class="sr g2" style="left:13px;top:36.09px;width:270px">
<div class="l" style="left:1.5px">System: ASUS ROG ZENITH II...</div>
</div>
<div class="a" style="left:6px;top:37.20px;width:5.4px;height:8.4px;background:#333;border-radius:1px"></div><div class="a" style="left:7px;top:38.80px;width:3.4px;height:1px;background:#ccc"></div><div class="a" style="left:7px;top:42.00px;width:3.4px;height:1px;background:#ccc"></div>
<div class="sr g1" style="left:3px;top:46.72px;width:280px">
<div class="l" style="left:11.5px">Virtual Memory Com...</div>
<div class="v" style="left:66px">16,708 MB</div>
<div class="v" style="left:116px">16,701 MB</div>
<div class="v" style="left:166px">16,708 MB</div>
<div class="v" style="left:216px">16,704 MB</div>
</div>
<div class="a" style="left:5px;top:48.43px;width:7.2px;height:7.2px;border:1px solid #555;border-radius:50%;background:#f4f4f4"></div><div class="a" style="left:8.2px;top:50.03px;width:1px;height:2.6px;background:#444"></div>
<div class="sr " style="left:3px;top:57.34px;width:280px">
<div class="l" style="left:11.5px">Virtual Memory Avai...</div>
<div class="v" style="left:66px">296,111 MB</div>
<div class="v" style="left:116px">296,111 MB</div>
<div class="v" style="left:166px">296,298 MB</div>
<div class="v" style="left:216px">296,278 MB</div>
</div>
<div class="a" style="left:5px;top:59.06px;width:7.2px;height:7.2px;border:1px solid #555;border-radius:50%;background:#f4f4f4"></div><div class="a" style="left:8.2px;top:60.66px;width:1px;height:2.6px;background:#444"></div>
<div class="sr g1" style="left:3px;top:67.97px;width:280px">
<div class="l" style="left:11.5px">Virtual Memory Load</div>
<div class="v" style="left:66px">5.3 %</div>
<div class="v" style="left:116px">5.3 %</div>
<div class="v" style="left:166px">5.3 %</div>
<div class="v" style="left:216px">5.3 %</div>
</div>
<div class="a" style="left:5px;top:69.69px;width:7.2px;height:7.2px;border:1px solid #555;border-radius:50%;background:#f4f4f4"></div><div class="a" style="left:8.2px;top:71.29px;width:1px;height:2.6px;background:#444"></div>
<div class="sr " style="left:3px;top:78.61px;width:280px">
<div class="l" style="left:11.5px">Physical Memory Used</div>
<div class="v" style="left:66px">14,796 MB</div>
<div class="v" style="left:116px">14,782 MB</div>
<div class="v" style="left:166px">14,796 MB</div>
<div class="v" style="left:216px">14,789 MB</div>
</div>
<div class="a" style="left:5px;top:80.32px;width:7.2px;height:7.2px;border:1px solid #555;border-radius:50%;background:#f4f4f4"></div><div class="a" style="left:8.2px;top:81.92px;width:1px;height:2.6px;background:#444"></div>
<div class="sr g1" style="left:3px;top:89.24px;width:280px">
<div class="l" style="left:11.5px">Physical Memory Av...</div>
<div class="v" style="left:66px">246,881 MB</div>
<div class="v" style="left:116px">246,881 MB</div>
<div class="v" style="left:166px">246,895 MB</div>
<div class="v" style="left:216px">246,887 MB</div>
</div>
<div class="a" style="left:5px;top:90.95px;width:7.2px;height:7.2px;border:1px solid #555;border-radius:50%;background:#f4f4f4"></div><div class="a" style="left:8.2px;top:92.55px;width:1px;height:2.6px;background:#444"></div>
<div class="sr " style="left:3px;top:99.87px;width:280px">
<div class="l" style="left:11.5px">Physical Memory Load</div>
<div class="v" style="left:66px">5.6 %</div>
<div class="v" style="left:116px">5.6 %</div>
<div class="v" style="left:166px">5.6 %</div>
<div class="v" style="left:216px">5.6 %</div>
</div>
<div class="a" style="left:5px;top:101.58px;width:7.2px;height:7.2px;border:1px solid #555;border-radius:50%;background:#f4f4f4"></div><div class="a" style="left:8.2px;top:103.18px;width:1px;height:2.6px;background:#444"></div>
<div class="sr g1" style="left:3px;top:110.50px;width:280px">
<div class="l" style="left:11.5px">Page File Usage</div>
<div class="v" style="left:66px">0.0 %</div>
<div class="v" style="left:116px">0.0 %</div>
<div class="v" style="left:166px">0.0 %</div>
<div class="v" style="left:216px">0.0 %</div>
</div>
<div class="a" style="left:5px;top:112.21px;width:7.2px;height:7.2px;border:1px solid #555;border-radius:50%;background:#f4f4f4"></div><div class="a" style="left:8.2px;top:113.81px;width:1px;height:2.6px;background:#444"></div>
<div class="sr g2" style="left:13px;top:131.75px;width:270px">
<div class="l" style="left:1.5px">CPU [#0]: AMD Ryzen 39...</div>
</div>
<div class="a" style="left:6px;top:132.87px;width:5.4px;height:8.4px;background:#333;border-radius:1px"></div><div class="a" style="left:7px;top:134.47px;width:3.4px;height:1px;background:#ccc"></div><div class="a" style="left:7px;top:137.67px;width:3.4px;height:1px;background:#ccc"></div>
<div class="sr " style="left:3px;top:142.39px;width:280px">
<div class="l" style="left:11.5px">CPU (Tctl/Tdie)</div>
<div class="v" style="left:66px">68.3 °C</div>
<div class="v" style="left:116px">68.0 °C</div>
<div class="v" style="left:166px">68.6 °C</div>
<div class="v" style="left:216px">68.3 °C</div>
</div>
<div class="a" style="left:7.6px;top:143.70px;width:1.6px;height:8px;background:#333;border-radius:1px"></div><div class="a" style="left:6.9px;top:149.30px;width:3px;height:3px;border-radius:50%;background:#222"></div>
<div class="sr g1" style="left:3px;top:153.02px;width:280px">
<div class="l" style="left:11.5px">CPU Die (average)</div>
<div class="v" style="left:66px">67.7 °C</div>
<div class="v" style="left:116px">67.4 °C</div>
<div class="v" style="left:166px">68.0 °C</div>
<div class="v" style="left:216px">67.7 °C</div>
</div>
<div class="a" style="left:7.6px;top:154.33px;width:1.6px;height:8px;background:#333;border-radius:1px"></div><div class="a" style="left:6.9px;top:159.93px;width:3px;height:3px;border-radius:50%;background:#222"></div>
<div class="sr " style="left:3px;top:163.65px;width:280px">
<div class="l" style="left:11.5px">CPU CCD1 (Tdie)</div>
<div class="v" style="left:66px">65.3 °C</div>
<div class="v" style="left:116px">65.0 °C</div>
<div class="v" style="left:166px">65.6 °C</div>
<div class="v" style="left:216px">65.3 °C</div>
</div>
<div class="a" style="left:7.6px;top:164.96px;width:1.6px;height:8px;background:#333;border-radius:1px"></div><div class="a" style="left:6.9px;top:170.56px;width:3px;height:3px;border-radius:50%;background:#222"></div>
<div class="sr g1" style="left:3px;top:174.28px;width:280px">
<div class="l" style="left:11.5px">CPU CCD2 (Tdie)</div>
<div class="v" style="left:66px">66.8 °C</div>
<div class="v" style="left:116px">66.5 °C</div>
<div class="v" style="left:166px">67.1 °C</div>
<div class="v" style="left:216px">66.8 °C</div>
</div>
<div class="a" style="left:7.6px;top:175.59px;width:1.6px;height:8px;background:#333;border-radius:1px"></div><div class="a" style="left:6.9px;top:181.19px;width:3px;height:3px;border-radius:50%;background:#222"></div>
<div class="sr " style="left:3px;top:184.91px;width:280px">
<div class="l" style="left:11.5px">CPU CCD3 (Tdie)</div>
<div class="v" style="left:66px">65.5 °C</div>
<div class="v" style="left:116px">65.2 °C</div>
<div class="v" style="left:166px">65.8 °C</div>
<div class="v" style="left:216px">65.5 °C</div>
</div>
<div class="a" style="left:7.6px;top:186.22px;width:1.6px;height:8px;background:#333;border-radius:1px"></div><div class="a" style="left:6.9px;top:191.82px;width:3px;height:3px;border-radius:50%;background:#222"></div>
<div class="sr g1" style="left:3px;top:195.54px;width:280px">
<div class="l" style="left:11.5px">CPU CCD4 (Tdie)</div>
<div class="v" style="left:66px">66.0 °C</div>
<div class="v" style="left:116px">65.7 °C</div>
<div class="v" style="left:166px">66.3 °C</div>
<div class="v" style="left:216px">66.0 °C</div>
</div>
<div class="a" style="left:7.6px;top:196.85px;width:1.6px;height:8px;background:#333;border-radius:1px"></div><div class="a" style="left:6.9px;top:202.45px;width:3px;height:3px;border-radius:50%;background:#222"></div>
<div class="sr " style="left:3px;top:206.17px;width:280px">
<div class="l" style="left:11.5px">CPU CCD5 (Tdie)</div>
<div class="v" style="left:66px">68.3 °C</div>
<div class="v" style="left:116px">68.0 °C</div>
<div class="v" style="left:166px">68.6 °C</div>
<div class="v" style="left:216px">68.3 °C</div>
</div>
<div class="a" style="left:7.6px;top:207.48px;width:1.6px;height:8px;background:#333;border-radius:1px"></div><div class="a" style="left:6.9px;top:213.08px;width:3px;height:3px;border-radius:50%;background:#222"></div>
<div class="sr g1" style="left:3px;top:216.80px;width:280px">
<div class="l" style="left:11.5px">CPU CCD6 (Tdie)</div>
<div class="v" style="left:66px">66.5 °C</div>
<div class="v" style="left:116px">66.2 °C</div>
<div class="v" style="left:166px">66.8 °C</div>
<div class="v" style="left:216px">66.5 °C</div>
</div>
<div class="a" style="left:7.6px;top:218.11px;width:1.6px;height:8px;background:#333;border-radius:1px"></div><div class="a" style="left:6.9px;top:223.71px;width:3px;height:3px;border-radius:50%;background:#222"></div>
<div class="sr " style="left:3px;top:227.43px;width:280px">
<div class="l" style="left:11.5px">CPU CCD7 (Tdie)</div>
<div class="v" style="left:66px">65.8 °C</div>
<div class="v" style="left:116px">65.5 °C</div>
<div class="v" style="left:166px">66.1 °C</div>
<div class="v" style="left:216px">65.8 °C</div>
</div>
<div class="a" style="left:7.6px;top:228.74px;width:1.6px;height:8px;background:#333;border-radius:1px"></div><div class="a" style="left:6.9px;top:234.34px;width:3px;height:3px;border-radius:50%;background:#222"></div>
<div class="sr g1" style="left:3px;top:238.06px;width:280px">
<div class="l" style="left:11.5px">CPU CCD8 (Tdie)</div>
<div class="v" style="left:66px">67.3 °C</div>
<div class="v" style="left:116px">67.0 °C</div>
<div class="v" style="left:166px">67.6 °C</div>
<div class="v" style="left:216px">67.3 °C</div>
</div>
<div class="a" style="left:7.6px;top:239.37px;width:1.6px;height:8px;background:#333;border-radius:1px"></div><div class="a" style="left:6.9px;top:244.97px;width:3px;height:3px;border-radius:50%;background:#222"></div>
<div class="sr " style="left:3px;top:248.69px;width:280px">
<div class="l" style="left:11.5px">CPU Core Voltage (...</div>
<div class="v" style="left:66px">1.069 V</div>
<div class="v" style="left:116px">1.069 V</div>
<div class="v" style="left:166px">1.069 V</div>
<div class="v" style="left:216px">1.069 V</div>
</div>
<div class="a" style="left:7px;top:249.40px;width:2.2px;height:9.2px;background:#f2b33a;transform:skewX(-8deg)"></div>
<div class="sr g1" style="left:3px;top:259.31px;width:280px">
<div class="l" style="left:11.5px">SoC Voltage (SVI2 ...</div>
<div class="v" style="left:66px">1.088 V</div>
<div class="v" style="left:116px">1.088 V</div>
<div class="v" style="left:166px">1.088 V</div>
<div class="v" style="left:216px">1.088 V</div>
</div>
<div class="a" style="left:7px;top:260.03px;width:2.2px;height:9.2px;background:#f2b33a;transform:skewX(-8deg)"></div>
<div class="sr " style="left:3px;top:269.94px;width:280px">
<div class="l" style="left:11.5px">CPU Core VID (Effe...</div>
<div class="v" style="left:66px">1.081 V</div>
<div class="v" style="left:116px">1.081 V</div>
<div class="v" style="left:166px">1.081 V</div>
<div class="v" style="left:216px">1.081 V</div>
</div>
<div class="a" style="left:7px;top:270.66px;width:2.2px;height:9.2px;background:#f2b33a;transform:skewX(-8deg)"></div>
<div class="sr g1" style="left:3px;top:280.57px;width:280px">
<div class="l" style="left:11.5px">CPU Core Current (...</div>
<div class="v" style="left:66px">168.783 A</div>
<div class="v" style="left:116px">168.783 A</div>
<div class="v" style="left:166px">168.783 A</div>
<div class="v" style="left:216px">168.783 A</div>
</div>
<div class="a" style="left:7px;top:281.29px;width:2.2px;height:9.2px;background:#f2b33a;transform:skewX(-8deg)"></div>
<div class="sr " style="left:3px;top:291.20px;width:280px">
<div class="l" style="left:11.5px">SoC Current (SVI2 ...</div>
<div class="v" style="left:66px">39.898 A</div>
<div class="v" style="left:116px">39.898 A</div>
<div class="v" style="left:166px">39.898 A</div>
<div class="v" style="left:216px">39.898 A</div>
</div>
<div class="a" style="left:7px;top:291.92px;width:2.2px;height:9.2px;background:#f2b33a;transform:skewX(-8deg)"></div>
<div class="sr g1" style="left:3px;top:301.83px;width:280px">
<div class="l" style="left:11.5px">CPU TDC</div>
<div class="v" style="left:66px">208.682 A</div>
<div class="v" style="left:116px">208.682 A</div>
<div class="v" style="left:166px">208.682 A</div>
<div class="v" style="left:216px">208.682 A</div>
</div>
<div class="a" style="left:7px;top:302.55px;width:2.2px;height:9.2px;background:#f2b33a;transform:skewX(-8deg)"></div>
<div class="sr " style="left:3px;top:312.46px;width:280px">
<div class="l" style="left:11.5px">CPU EDC</div>
<div class="v" style="left:66px">168.783 A</div>
<div class="v" style="left:116px">168.783 A</div>
<div class="v" style="left:166px">168.783 A</div>
<div class="v" style="left:216px">168.783 A</div>
</div>
<div class="a" style="left:7px;top:313.18px;width:2.2px;height:9.2px;background:#f2b33a;transform:skewX(-8deg)"></div>
<div class="sr g1" style="left:3px;top:323.10px;width:280px">
<div class="l" style="left:11.5px">CPU Package Powe...</div>
<div class="v" style="left:66px">278.148 W</div>
<div class="v" style="left:116px">278.148 W</div>
<div class="v" style="left:166px">278.148 W</div>
<div class="v" style="left:216px">278.148 W</div>
</div>
<div class="a" style="left:7px;top:323.81px;width:2.2px;height:9.2px;background:#f2b33a;transform:skewX(-8deg)"></div>
<div class="sr " style="left:3px;top:333.73px;width:280px">
<div class="l" style="left:11.5px">Core 0 Power (SMU)</div>
<div class="v" style="left:66px">3.406 W</div>
<div class="v" style="left:116px">3.406 W</div>
<div class="v" style="left:166px">3.406 W</div>
<div class="v" style="left:216px">3.406 W</div>
</div>
<div class="a" style="left:7px;top:334.44px;width:2.2px;height:9.2px;background:#f2b33a;transform:skewX(-8deg)"></div>
<div class="sr g1" style="left:3px;top:344.36px;width:280px">
<div class="l" style="left:11.5px">Core 1 Power (SMU)</div>
<div class="v" style="left:66px">3.407 W</div>
<div class="v" style="left:116px">3.407 W</div>
<div class="v" style="left:166px">3.407 W</div>
<div class="v" style="left:216px">3.407 W</div>
</div>
<div class="a" style="left:7px;top:345.07px;width:2.2px;height:9.2px;background:#f2b33a;transform:skewX(-8deg)"></div>
<div class="sr " style="left:3px;top:354.99px;width:280px">
<div class="l" style="left:11.5px">Core 2 Power (SMU)</div>
<div class="v" style="left:66px">3.282 W</div>
<div class="v" style="left:116px">3.282 W</div>
<div class="v" style="left:166px">3.282 W</div>
<div class="v" style="left:216px">3.282 W</div>
</div>
<div class="a" style="left:7px;top:355.70px;width:2.2px;height:9.2px;background:#f2b33a;transform:skewX(-8deg)"></div>
<div class="sr g1" style="left:3px;top:365.62px;width:280px">
<div class="l" style="left:11.5px">Core 3 Power (SMU)</div>
<div class="v" style="left:66px">3.463 W</div>
<div class="v" style="left:116px">3.463 W</div>
<div class="v" style="left:166px">3.463 W</div>
<div class="v" style="left:216px">3.463 W</div>
</div>
<div class="a" style="left:7px;top:366.33px;width:2.2px;height:9.2px;background:#f2b33a;transform:skewX(-8deg)"></div>
<div class="sr " style="left:3px;top:376.25px;width:280px">
<div class="l" style="left:11.5px">Core 4 Power (SMU)</div>
<div class="v" style="left:66px">3.304 W</div>
<div class="v" style="left:116px">3.304 W</div>
<div class="v" style="left:166px">3.304 W</div>
<div class="v" style="left:216px">3.304 W</div>
</div>
<div class="a" style="left:7px;top:376.96px;width:2.2px;height:9.2px;background:#f2b33a;transform:skewX(-8deg)"></div>
<div class="sr g1" style="left:3px;top:386.88px;width:280px">
<div class="l" style="left:11.5px">Core 5 Power (SMU)</div>
<div class="v" style="left:66px">3.385 W</div>
<div class="v" style="left:116px">3.385 W</div>
<div class="v" style="left:166px">3.385 W</div>
<div class="v" style="left:216px">3.385 W</div>
</div>
<div class="a" style="left:7px;top:387.59px;width:2.2px;height:9.2px;background:#f2b33a;transform:skewX(-8deg)"></div>
<div class="sr " style="left:3px;top:397.50px;width:280px">
<div class="l" style="left:11.5px">Core 6 Power (SMU)</div>
<div class="v" style="left:66px">3.382 W</div>
<div class="v" style="left:116px">3.382 W</div>
<div class="v" style="left:166px">3.382 W</div>
<div class="v" style="left:216px">3.382 W</div>
</div>
<div class="a" style="left:7px;top:398.22px;width:2.2px;height:9.2px;background:#f2b33a;transform:skewX(-8deg)"></div>
<div class="sr g1" style="left:3px;top:408.13px;width:280px">
<div class="l" style="left:11.5px">Core 7 Power (SMU)</div>
<div class="v" style="left:66px">3.396 W</div>
<div class="v" style="left:116px">3.396 W</div>
<div class="v" style="left:166px">3.396 W</div>
<div class="v" style="left:216px">3.396 W</div>
</div>
<div class="a" style="left:7px;top:408.85px;width:2.2px;height:9.2px;background:#f2b33a;transform:skewX(-8deg)"></div>
<div class="sr " style="left:3px;top:418.76px;width:280px">
<div class="l" style="left:11.5px">Core 8 Power (SMU)</div>
<div class="v" style="left:66px">3.279 W</div>
<div class="v" style="left:116px">3.279 W</div>
<div class="v" style="left:166px">3.279 W</div>
<div class="v" style="left:216px">3.279 W</div>
</div>
<div class="a" style="left:7px;top:419.48px;width:2.2px;height:9.2px;background:#f2b33a;transform:skewX(-8deg)"></div>
<div class="sr g1" style="left:3px;top:429.39px;width:280px">
<div class="l" style="left:11.5px">Core 9 Power (SMU)</div>
<div class="v" style="left:66px">3.358 W</div>
<div class="v" style="left:116px">3.358 W</div>
<div class="v" style="left:166px">3.358 W</div>
<div class="v" style="left:216px">3.358 W</div>
</div>
<div class="a" style="left:7px;top:430.11px;width:2.2px;height:9.2px;background:#f2b33a;transform:skewX(-8deg)"></div>
<div class="sr " style="left:3px;top:440.03px;width:280px">
<div class="l" style="left:11.5px">Core 10 Power (SMU)</div>
<div class="v" style="left:66px">3.378 W</div>
<div class="v" style="left:116px">3.378 W</div>
<div class="v" style="left:166px">3.378 W</div>
<div class="v" style="left:216px">3.378 W</div>
</div>
<div class="a" style="left:7px;top:440.74px;width:2.2px;height:9.2px;background:#f2b33a;transform:skewX(-8deg)"></div>
<div class="sr " style="left:304px;top:36.09px;width:279px">
<div class="l" style="left:11.5px">Write Total</div>
<div class="v" style="left:65px">0 MB</div>
<div class="v" style="left:115px">0 MB</div>
<div class="v" style="left:165px">0 MB</div>
<div class="v" style="left:215px"></div>
</div>
<div class="a" style="left:306px;top:37.80px;width:7.2px;height:7.2px;border:1px solid #555;border-radius:50%;background:#f4f4f4"></div><div class="a" style="left:309.2px;top:39.40px;width:1px;height:2.6px;background:#444"></div>
<div class="sr g1" style="left:314px;top:46.72px;width:269px"></div>
<div class="sr g2" style="left:314px;top:57.34px;width:269px">
<div class="l" style="left:1.5px">GPU [#0]: NVIDIA GeF...</div>
</div>
<div class="a" style="left:307px;top:58.46px;width:5.4px;height:8.4px;background:#333;border-radius:1px"></div><div class="a" style="left:308px;top:60.06px;width:3.4px;height:1px;background:#ccc"></div><div class="a" style="left:308px;top:63.26px;width:3.4px;height:1px;background:#ccc"></div>
<div class="sr g1" style="left:304px;top:67.97px;width:279px">
<div class="l" style="left:11.5px">GPU Temperature</div>
<div class="v" style="left:65px">36 °C</div>
<div class="v" style="left:115px">36 °C</div>
<div class="v" style="left:165px">36 °C</div>
<div class="v" style="left:215px">36 °C</div>
</div>
<div class="a" style="left:308.6px;top:69.29px;width:1.6px;height:8px;background:#333;border-radius:1px"></div><div class="a" style="left:307.9px;top:74.89px;width:3px;height:3px;border-radius:50%;background:#222"></div>
<div class="sr " style="left:304px;top:78.61px;width:279px">
<div class="l" style="left:11.5px">GPU Memory Juncti...</div>
<div class="v" style="left:65px">40.0 °C</div>
<div class="v" style="left:115px">40.0 °C</div>
<div class="v" style="left:165px">40.0 °C</div>
<div class="v" style="left:215px">40.1 °C</div>
</div>
<div class="a" style="left:308.6px;top:79.92px;width:1.6px;height:8px;background:#333;border-radius:1px"></div><div class="a" style="left:307.9px;top:85.52px;width:3px;height:3px;border-radius:50%;background:#222"></div>
<div class="sr g1" style="left:304px;top:89.24px;width:279px">
<div class="l" style="left:11.5px">GPU Core Voltage</div>
<div class="v" style="left:65px">0.718 V</div>
<div class="v" style="left:115px">0.718 V</div>
<div class="v" style="left:165px">0.718 V</div>
<div class="v" style="left:215px">0.718 V</div>
</div>
<div class="a" style="left:308px;top:89.95px;width:2.2px;height:9.2px;background:#f2b33a;transform:skewX(-8deg)"></div>
<div class="sr " style="left:304px;top:99.87px;width:279px">
<div class="l" style="left:11.5px">GPU PCIe +3.3V Inp...</div>
<div class="v" style="left:65px">12.086 V</div>
<div class="v" style="left:115px">12.086 V</div>
<div class="v" style="left:165px">12.086 V</div>
<div class="v" style="left:215px">12.086 V</div>
</div>
<div class="a" style="left:308px;top:100.58px;width:2.2px;height:9.2px;background:#f2b33a;transform:skewX(-8deg)"></div>
<div class="sr g1" style="left:304px;top:110.50px;width:279px">
<div class="l" style="left:11.5px">GPU 8-pin #1 Input...</div>
<div class="v" style="left:65px">12.078 V</div>
<div class="v" style="left:115px">12.078 V</div>
<div class="v" style="left:165px">12.078 V</div>
<div class="v" style="left:215px">12.078 V</div>
</div>
<div class="a" style="left:308px;top:111.21px;width:2.2px;height:9.2px;background:#f2b33a;transform:skewX(-8deg)"></div>
<div class="sr " style="left:304px;top:121.12px;width:279px">
<div class="l" style="left:11.5px">GPU 8-pin #2 Input...</div>
<div class="v" style="left:65px">12.086 V</div>
<div class="v" style="left:115px">12.086 V</div>
<div class="v" style="left:165px">12.086 V</div>
<div class="v" style="left:215px">12.086 V</div>
</div>
<div class="a" style="left:308px;top:121.84px;width:2.2px;height:9.2px;background:#f2b33a;transform:skewX(-8deg)"></div>
<div class="sr g1" style="left:304px;top:131.75px;width:279px">
<div class="l" style="left:11.5px">GPU Misc0 Input Vo...</div>
<div class="v" style="left:65px">12.086 V</div>
<div class="v" style="left:115px">12.086 V</div>
<div class="v" style="left:165px">12.086 V</div>
<div class="v" style="left:215px">12.086 V</div>
</div>
<div class="a" style="left:308px;top:132.47px;width:2.2px;height:9.2px;background:#f2b33a;transform:skewX(-8deg)"></div>
<div class="sr " style="left:304px;top:142.39px;width:279px">
<div class="l" style="left:11.5px">GPU Misc2 Input Vo...</div>
<div class="v" style="left:65px">11.851 V</div>
<div class="v" style="left:115px">11.851 V</div>
<div class="v" style="left:165px">11.851 V</div>
<div class="v" style="left:215px">11.851 V</div>
</div>
<div class="a" style="left:308px;top:143.10px;width:2.2px;height:9.2px;background:#f2b33a;transform:skewX(-8deg)"></div>
<div class="sr g1" style="left:304px;top:153.02px;width:279px">
<div class="l" style="left:11.5px">GPU Misc3 Input Vo...</div>
<div class="v" style="left:65px">12.180 V</div>
<div class="v" style="left:115px">12.180 V</div>
<div class="v" style="left:165px">12.180 V</div>
<div class="v" style="left:215px">12.180 V</div>
</div>
<div class="a" style="left:308px;top:153.73px;width:2.2px;height:9.2px;background:#f2b33a;transform:skewX(-8deg)"></div>
<div class="sr " style="left:304px;top:163.65px;width:279px">
<div class="l" style="left:11.5px">GPU SRAM Output ...</div>
<div class="v" style="left:65px">0.708 V</div>
<div class="v" style="left:115px">0.708 V</div>
<div class="v" style="left:165px">0.708 V</div>
<div class="v" style="left:215px">0.708 V</div>
</div>
<div class="a" style="left:308px;top:164.36px;width:2.2px;height:9.2px;background:#f2b33a;transform:skewX(-8deg)"></div>
<div class="sr g1" style="left:304px;top:174.28px;width:279px">
<div class="l" style="left:11.5px">GPU Power</div>
<div class="v" style="left:65px">1.003,000 W</div>
<div class="v" style="left:115px">808.000 W</div>
<div class="v" style="left:165px">1.003,000 W</div>
<div class="v" style="left:215px">1.003,000 W</div>
</div>
<div class="a" style="left:306px;top:175.59px;width:7.5px;height:8px;background:#3a3a3a"></div><div class="a" style="left:307.6px;top:177.19px;width:4.2px;height:4.6px;background:#ddd"></div>
<div class="sr " style="left:304px;top:184.91px;width:279px">
<div class="l" style="left:11.5px">GPU Power</div>
<div class="v" style="left:65px">15.702 W</div>
<div class="v" style="left:115px">15.702 W</div>
<div class="v" style="left:165px">15.702 W</div>
<div class="v" style="left:215px">15.702 W</div>
</div>
<div class="a" style="left:308px;top:185.62px;width:2.2px;height:9.2px;background:#f2b33a;transform:skewX(-8deg)"></div>
<div class="sr g1" style="left:304px;top:195.54px;width:279px">
<div class="l" style="left:11.5px">GPU Core (NVVDD) ...</div>
<div class="v" style="left:65px">5.808 W</div>
<div class="v" style="left:115px">5.808 W</div>
<div class="v" style="left:165px">5.808 W</div>
<div class="v" style="left:215px">5.808 W</div>
</div>
<div class="a" style="left:308px;top:196.25px;width:2.2px;height:9.2px;background:#f2b33a;transform:skewX(-8deg)"></div>
<div class="sr " style="left:304px;top:206.17px;width:279px">
<div class="l" style="left:11.5px">GPU Core (NVVDD) P...</div>
<div class="v" style="left:65px">0.418 W</div>
<div class="v" style="left:115px">0.418 W</div>
<div class="v" style="left:165px">0.418 W</div>
<div class="v" style="left:215px">0.418 W</div>
</div>
<div class="a" style="left:308px;top:206.88px;width:2.2px;height:9.2px;background:#f2b33a;transform:skewX(-8deg)"></div>
<div class="sr g1" style="left:304px;top:216.80px;width:279px">
<div class="l" style="left:11.5px">GPU FBVDD Input P...</div>
<div class="v" style="left:65px">6.712 W</div>
<div class="v" style="left:115px">6.712 W</div>
<div class="v" style="left:165px">6.712 W</div>
<div class="v" style="left:215px">6.712 W</div>
</div>
<div class="a" style="left:308px;top:217.51px;width:2.2px;height:9.2px;background:#f2b33a;transform:skewX(-8deg)"></div>
<div class="sr " style="left:304px;top:227.43px;width:279px">
<div class="l" style="left:11.5px">GPU PCIe +3.3V Inp...</div>
<div class="v" style="left:65px">1.007 W</div>
<div class="v" style="left:115px">1.007 W</div>
<div class="v" style="left:165px">1.007 W</div>
<div class="v" style="left:215px">1.007 W</div>
</div>
<div class="a" style="left:308px;top:228.14px;width:2.2px;height:9.2px;background:#f2b33a;transform:skewX(-8deg)"></div>
<div class="sr g1" style="left:304px;top:238.06px;width:279px">
<div class="l" style="left:11.5px">GPU 8-pin #1 Input...</div>
<div class="v" style="left:65px">8.388 W</div>
<div class="v" style="left:115px">8.388 W</div>
<div class="v" style="left:165px">8.388 W</div>
<div class="v" style="left:215px">8.388 W</div>
</div>
<div class="a" style="left:308px;top:238.77px;width:2.2px;height:9.2px;background:#f2b33a;transform:skewX(-8deg)"></div>
<div class="sr " style="left:304px;top:248.69px;width:279px">
<div class="l" style="left:11.5px">GPU 8-pin #2 Input...</div>
<div class="v" style="left:65px">3.447 W</div>
<div class="v" style="left:115px">3.447 W</div>
<div class="v" style="left:165px">3.447 W</div>
<div class="v" style="left:215px">3.447 W</div>
</div>
<div class="a" style="left:308px;top:249.40px;width:2.2px;height:9.2px;background:#f2b33a;transform:skewX(-8deg)"></div>
<div class="sr g1" style="left:304px;top:259.31px;width:279px">
<div class="l" style="left:11.5px">GPU Misc0 Input Po...</div>
<div class="v" style="left:65px">6.004 W</div>
<div class="v" style="left:115px">6.004 W</div>
<div class="v" style="left:165px">6.004 W</div>
<div class="v" style="left:215px">6.004 W</div>
</div>
<div class="a" style="left:308px;top:260.03px;width:2.2px;height:9.2px;background:#f2b33a;transform:skewX(-8deg)"></div>
<div class="sr " style="left:304px;top:269.94px;width:279px">
<div class="l" style="left:11.5px">GPU Misc2 Input Po...</div>
<div class="v" style="left:65px">0.312 W</div>
<div class="v" style="left:115px">0.312 W</div>
<div class="v" style="left:165px">0.312 W</div>
<div class="v" style="left:215px">0.312 W</div>
</div>
<div class="a" style="left:308px;top:270.66px;width:2.2px;height:9.2px;background:#f2b33a;transform:skewX(-8deg)"></div>
<div class="sr g1" style="left:304px;top:280.57px;width:279px">
<div class="l" style="left:11.5px">GPU Misc3 Input Po...</div>
<div class="v" style="left:65px">6.812 W</div>
<div class="v" style="left:115px">6.812 W</div>
<div class="v" style="left:165px">6.812 W</div>
<div class="v" style="left:215px">6.812 W</div>
</div>
<div class="a" style="left:308px;top:281.29px;width:2.2px;height:9.2px;background:#f2b33a;transform:skewX(-8deg)"></div>
<div class="sr " style="left:304px;top:291.20px;width:279px">
<div class="l" style="left:11.5px">GPU Core (NVVDD) ...</div>
<div class="v" style="left:65px">2.443 W</div>
<div class="v" style="left:115px">2.443 W</div>
<div class="v" style="left:165px">2.443 W</div>
<div class="v" style="left:215px">2.443 W</div>
</div>
<div class="a" style="left:308px;top:291.92px;width:2.2px;height:9.2px;background:#f2b33a;transform:skewX(-8deg)"></div>
<div class="sr g1" style="left:304px;top:301.83px;width:279px">
<div class="l" style="left:11.5px">GPU Input PP Sourc...</div>
<div class="v" style="left:65px">18.708 W</div>
<div class="v" style="left:115px">18.708 W</div>
<div class="v" style="left:165px">18.708 W</div>
<div class="v" style="left:215px">18.708 W</div>
</div>
<div class="a" style="left:308px;top:302.55px;width:2.2px;height:9.2px;background:#f2b33a;transform:skewX(-8deg)"></div>
<div class="sr " style="left:304px;top:312.46px;width:279px">
<div class="l" style="left:11.5px">GPU Core (NVVDD2) ...</div>
<div class="v" style="left:65px">0.712 W</div>
<div class="v" style="left:115px">0.712 W</div>
<div class="v" style="left:165px">0.712 W</div>
<div class="v" style="left:215px">0.712 W</div>
</div>
<div class="a" style="left:308px;top:313.18px;width:2.2px;height:9.2px;background:#f2b33a;transform:skewX(-8deg)"></div>
<div class="sr g1" style="left:304px;top:323.10px;width:279px">
<div class="l" style="left:11.5px">GPU Misc1 Input Po...</div>
<div class="v" style="left:65px">6.803 W</div>
<div class="v" style="left:115px">6.803 W</div>
<div class="v" style="left:165px">6.803 W</div>
<div class="v" style="left:215px">6.803 W</div>
</div>
<div class="a" style="left:308px;top:323.81px;width:2.2px;height:9.2px;background:#f2b33a;transform:skewX(-8deg)"></div>
<div class="sr " style="left:304px;top:333.73px;width:279px">
<div class="l" style="left:11.5px">GPU 8-pin #3 Input...</div>
<div class="v" style="left:65px">18.712 W</div>
<div class="v" style="left:115px">18.712 W</div>
<div class="v" style="left:165px">18.712 W</div>
<div class="v" style="left:215px">18.712 W</div>
</div>
<div class="a" style="left:308px;top:334.44px;width:2.2px;height:9.2px;background:#f2b33a;transform:skewX(-8deg)"></div>
<div class="sr g1" style="left:304px;top:344.36px;width:279px">
<div class="l" style="left:11.5px">GPU Core (NVVDD) ...</div>
<div class="v" style="left:65px">8.388 W</div>
<div class="v" style="left:115px">8.388 W</div>
<div class="v" style="left:165px">8.388 W</div>
<div class="v" style="left:215px">8.388 W</div>
</div>
<div class="a" style="left:308px;top:345.07px;width:2.2px;height:9.2px;background:#f2b33a;transform:skewX(-8deg)"></div>
<div class="sr " style="left:304px;top:354.99px;width:279px">
<div class="l" style="left:11.5px">GPU Core (NVVDD) ...</div>
<div class="v" style="left:65px">1.708 W</div>
<div class="v" style="left:115px">1.708 W</div>
<div class="v" style="left:165px">1.708 W</div>
<div class="v" style="left:215px">1.708 W</div>
</div>
<div class="a" style="left:308px;top:355.70px;width:2.2px;height:9.2px;background:#f2b33a;transform:skewX(-8deg)"></div>
<div class="sr g1" style="left:304px;top:365.62px;width:279px">
<div class="l" style="left:11.5px">GPU Core (NVVDD) ...</div>
<div class="v" style="left:65px">5.708 W</div>
<div class="v" style="left:115px">5.708 W</div>
<div class="v" style="left:165px">5.708 W</div>
<div class="v" style="left:215px">5.708 W</div>
</div>
<div class="a" style="left:308px;top:366.33px;width:2.2px;height:9.2px;background:#f2b33a;transform:skewX(-8deg)"></div>
<div class="sr " style="left:304px;top:376.25px;width:279px">
<div class="l" style="left:11.5px">GPU Core (NVVDD) ...</div>
<div class="v" style="left:65px">1.708 W</div>
<div class="v" style="left:115px">1.708 W</div>
<div class="v" style="left:165px">1.708 W</div>
<div class="v" style="left:215px">1.708 W</div>
</div>
<div class="a" style="left:308px;top:376.96px;width:2.2px;height:9.2px;background:#f2b33a;transform:skewX(-8deg)"></div>
<div class="sr g1" style="left:304px;top:386.88px;width:279px">
<div class="l" style="left:11.5px">GPU Clock</div>
<div class="v" style="left:65px">300.0 MHz</div>
<div class="v" style="left:115px">300.0 MHz</div>
<div class="v" style="left:165px">300.0 MHz</div>
<div class="v" style="left:215px">301.7 MHz</div>
</div>
<div class="a" style="left:306px;top:388.59px;width:7.2px;height:7.2px;border:1px solid #555;border-radius:50%;background:#f4f4f4"></div><div class="a" style="left:309.2px;top:390.19px;width:1px;height:2.6px;background:#444"></div>
<div class="sr " style="left:304px;top:397.50px;width:279px">
<div class="l" style="left:11.5px">GPU Memory Clock</div>
<div class="v" style="left:65px">101.3 MHz</div>
<div class="v" style="left:115px">101.3 MHz</div>
<div class="v" style="left:165px">101.3 MHz</div>
<div class="v" style="left:215px">101.3 MHz</div>
</div>
<div class="a" style="left:306px;top:399.22px;width:7.2px;height:7.2px;border:1px solid #555;border-radius:50%;background:#f4f4f4"></div><div class="a" style="left:309.2px;top:400.82px;width:1px;height:2.6px;background:#444"></div>
<div class="sr g1" style="left:304px;top:408.13px;width:279px">
<div class="l" style="left:11.5px">GPU Video Clock</div>
<div class="v" style="left:65px">555.0 MHz</div>
<div class="v" style="left:115px">555.0 MHz</div>
<div class="v" style="left:165px">555.0 MHz</div>
<div class="v" style="left:215px">555.0 MHz</div>
</div>
<div class="a" style="left:306px;top:409.85px;width:7.2px;height:7.2px;border:1px solid #555;border-radius:50%;background:#f4f4f4"></div><div class="a" style="left:309.2px;top:411.45px;width:1px;height:2.6px;background:#444"></div>
<div class="sr " style="left:304px;top:418.76px;width:279px">
<div class="l" style="left:11.5px">GPU Effective Clock</div>
<div class="v" style="left:65px">18.8 MHz</div>
<div class="v" style="left:115px">18.8 MHz</div>
<div class="v" style="left:165px">18.8 MHz</div>
<div class="v" style="left:215px">18.8 MHz</div>
</div>
<div class="a" style="left:306px;top:420.48px;width:7.2px;height:7.2px;border:1px solid #555;border-radius:50%;background:#f4f4f4"></div><div class="a" style="left:309.2px;top:422.08px;width:1px;height:2.6px;background:#444"></div>
<div class="sr g1" style="left:304px;top:429.39px;width:279px">
<div class="l" style="left:11.5px">GPU Core Load</div>
<div class="v" style="left:65px">0.0 %</div>
<div class="v" style="left:115px">0.0 %</div>
<div class="v" style="left:165px">46.0 %</div>
<div class="v" style="left:215px">0.8 %</div>
</div>
<div class="a" style="left:306px;top:431.11px;width:7.2px;height:7.2px;border:1px solid #555;border-radius:50%;background:#f4f4f4"></div><div class="a" style="left:309.2px;top:432.71px;width:1px;height:2.6px;background:#444"></div>
<div class="sr " style="left:304px;top:440.03px;width:279px">
<div class="l" style="left:11.5px">GPU Memory Contr...</div>
<div class="v" style="left:65px">0.0 %</div>
<div class="v" style="left:115px">0.0 %</div>
<div class="v" style="left:165px">0.0 %</div>
<div class="v" style="left:215px">0.0 %</div>
</div>
<div class="a" style="left:306px;top:441.74px;width:7.2px;height:7.2px;border:1px solid #555;border-radius:50%;background:#f4f4f4"></div><div class="a" style="left:309.2px;top:443.34px;width:1px;height:2.6px;background:#444"></div>
<div class="a" style="left:592px;top:22px;width:9px;height:428px;background:#f0f0f0"></div>
<div class="a" style="left:592px;top:294px;width:9px;height:79px;background:#c9c9c9"></div>
<div class="a" style="left:594px;top:25px;width:0;height:0;border-left:2.5px solid transparent;border-right:2.5px solid transparent;border-bottom:3px solid #444"></div>
<div class="a" style="left:594px;top:445px;width:0;height:0;border-left:2.5px solid transparent;border-right:2.5px solid transparent;border-top:3px solid #444"></div>
<div class="a" style="left:0;top:450.5px;width:603.3px;height:34.8px;background:#f3f3f3;border-top:1px solid #d8d8d8"></div>
<svg class="a" style="left:2px;top:457px" width="25" height="23" viewBox="0 0 25 23"><rect x=".5" y=".5" width="24" height="22" fill="#e6e4e4" stroke="#d0d0d0"/><circle cx="6.500" cy="11.500" r="3.600" fill="#2f8ee8"/><path d="M8,8.500 h2 v-1.500 l4.500,4.500 l-4.500,4.500 v-1.500 h-2z" fill="#2f8ee8"/><path d="M13.500,9.500 h3 v-3 l5.500,5 l-5.500,5 v-3 h-3z" fill="#2f8ee8"/></svg>
<svg class="a" style="left:27px;top:457px" width="26" height="23" viewBox="0 0 26 23"><rect x=".5" y=".5" width="25" height="22" fill="#e6e4e4" stroke="#d0d0d0"/><path d="M12.500,9.500 h-3 v-3 l-5.500,5 l5.500,5 v-3 h3z" fill="#2f8ee8"/><path d="M13.500,9.500 h3 v-3 l5.500,5 l-5.500,5 v-3 h-3z" fill="#2f8ee8"/></svg>
<svg class="a" style="left:381px;top:455px" width="28" height="25" viewBox="0 0 28 25"><rect x=".5" y=".5" width="27" height="24" fill="#e2e2e2" stroke="#d0d0d0"/><rect x="7" y="3" width="13" height="10" rx="1" fill="#4a7fe0"/><rect x="8.500" y="4.500" width="10" height="7" fill="#bcd6fa"/><rect x="5" y="9" width="9" height="8" fill="#e8ecf4" stroke="#8a96b0" stroke-width=".6"/><circle cx="10" cy="16" r="3.500" fill="#cfd6e2" stroke="#7a86a0" stroke-width=".6"/><path d="M13,14 l6,6" stroke="#b03a3a" stroke-width="1.600"/><path d="M14,12 l5,3" stroke="#2450c0" stroke-width="2"/></svg>
<svg class="a" style="left:414px;top:455px" width="27" height="25" viewBox="0 0 27 25"><rect x=".5" y=".5" width="26" height="24" fill="#e2e2e2" stroke="#d0d0d0"/><rect x="5" y="5" width="9" height="6" rx="1" fill="#3f8be6"/><rect x="14" y="13" width="9" height="6" rx="1" fill="#3f8be6"/><path d="M10,11 v3 h4 M18,13 v-3 h-3" stroke="#666" stroke-width=".8" fill="none"/><rect x="7" y="11" width="5" height="1.500" fill="#2a5db0"/><rect x="16" y="19" width="5" height="1.500" fill="#2a5db0"/></svg>
<div class="t" style="left:456px;top:464px;font-size:6.5px;color:#111;text-shadow:0 0 .5px rgba(0,0,0,.6)">0:01:03</div>
<svg class="a" style="left:484px;top:455px" width="28" height="25" viewBox="0 0 28 25"><rect x=".5" y=".5" width="27" height="24" fill="#dcdcdc" stroke="#d0d0d0"/><circle cx="14" cy="12.500" r="9" fill="#fff" stroke="#222" stroke-width="1.100"/><path d="M14,6.500 v6 h5" stroke="#222" stroke-width="1.100" fill="none"/></svg>
<svg class="a" style="left:512px;top:455px" width="28" height="25" viewBox="0 0 28 25"><rect x=".5" y=".5" width="27" height="24" fill="#dcdcdc" stroke="#d0d0d0"/><path d="M8,5 h11 l3,3 v12 h-14z" fill="#f6f6ee" stroke="#c8c8b8" stroke-width=".7"/><path d="M14,17 l3,3 l5,-6" stroke="#58b83a" stroke-width="2.200" fill="none"/><circle cx="19" cy="17" r="4" fill="#7acb52" opacity=".55"/></svg>
<svg class="a" style="left:541px;top:455px" width="27" height="25" viewBox="0 0 27 25"><rect x=".5" y=".5" width="26" height="24" fill="#e2e2e2" stroke="#d0d0d0"/><circle cx="13.500" cy="12.500" r="7.500" fill="#e9e9e9" stroke="#555" stroke-width=".9"/><path d="M7,17 l4,-8 l3,4 l3,-6 l3,9" stroke="#444" stroke-width=".9" fill="none"/><path d="M17,18 l5,-3" stroke="#666" stroke-width="1"/></svg>
<svg class="a" style="left:571px;top:455px" width="26" height="25" viewBox="0 0 26 25"><rect x=".5" y=".5" width="25" height="24" fill="#e2e2e2" stroke="#d0d0d0"/><path d="M8,7.500 l10,10.500 M18,7.500 l-10,10.500" stroke="#2a86e6" stroke-width="4" stroke-linecap="round"/><path d="M10,9.500 l6,6.500 M16,9.500 l-6,6.500" stroke="#6cb4f4" stroke-width="1.400" stroke-linecap="round"/></svg>
</div>
<!-- sec_wm -->
<div class="t" style="left:1125.5px;top:587px;font-size:35px;font-weight:bold;color:#fff;letter-spacing:-.3px">sky</div>
<svg class="a" style="left:1128px;top:619.8px" width="40" height="16" viewBox="0 0 40 16"><g stroke="#fff" stroke-width="2.600" fill="none"><path d="M2,3 h15 M9.500,1 v14 M3,8 l5,5 M17,7 l-6,6 M12,7.500 h6"/><path d="M20.500,2.200 h15 v12.500 M20.500,2.200 v12.800 M24.500,6.500 h7.500 v5 h-7.500z M35.500,14.500 h-3"/></g></svg>
</body></html>
